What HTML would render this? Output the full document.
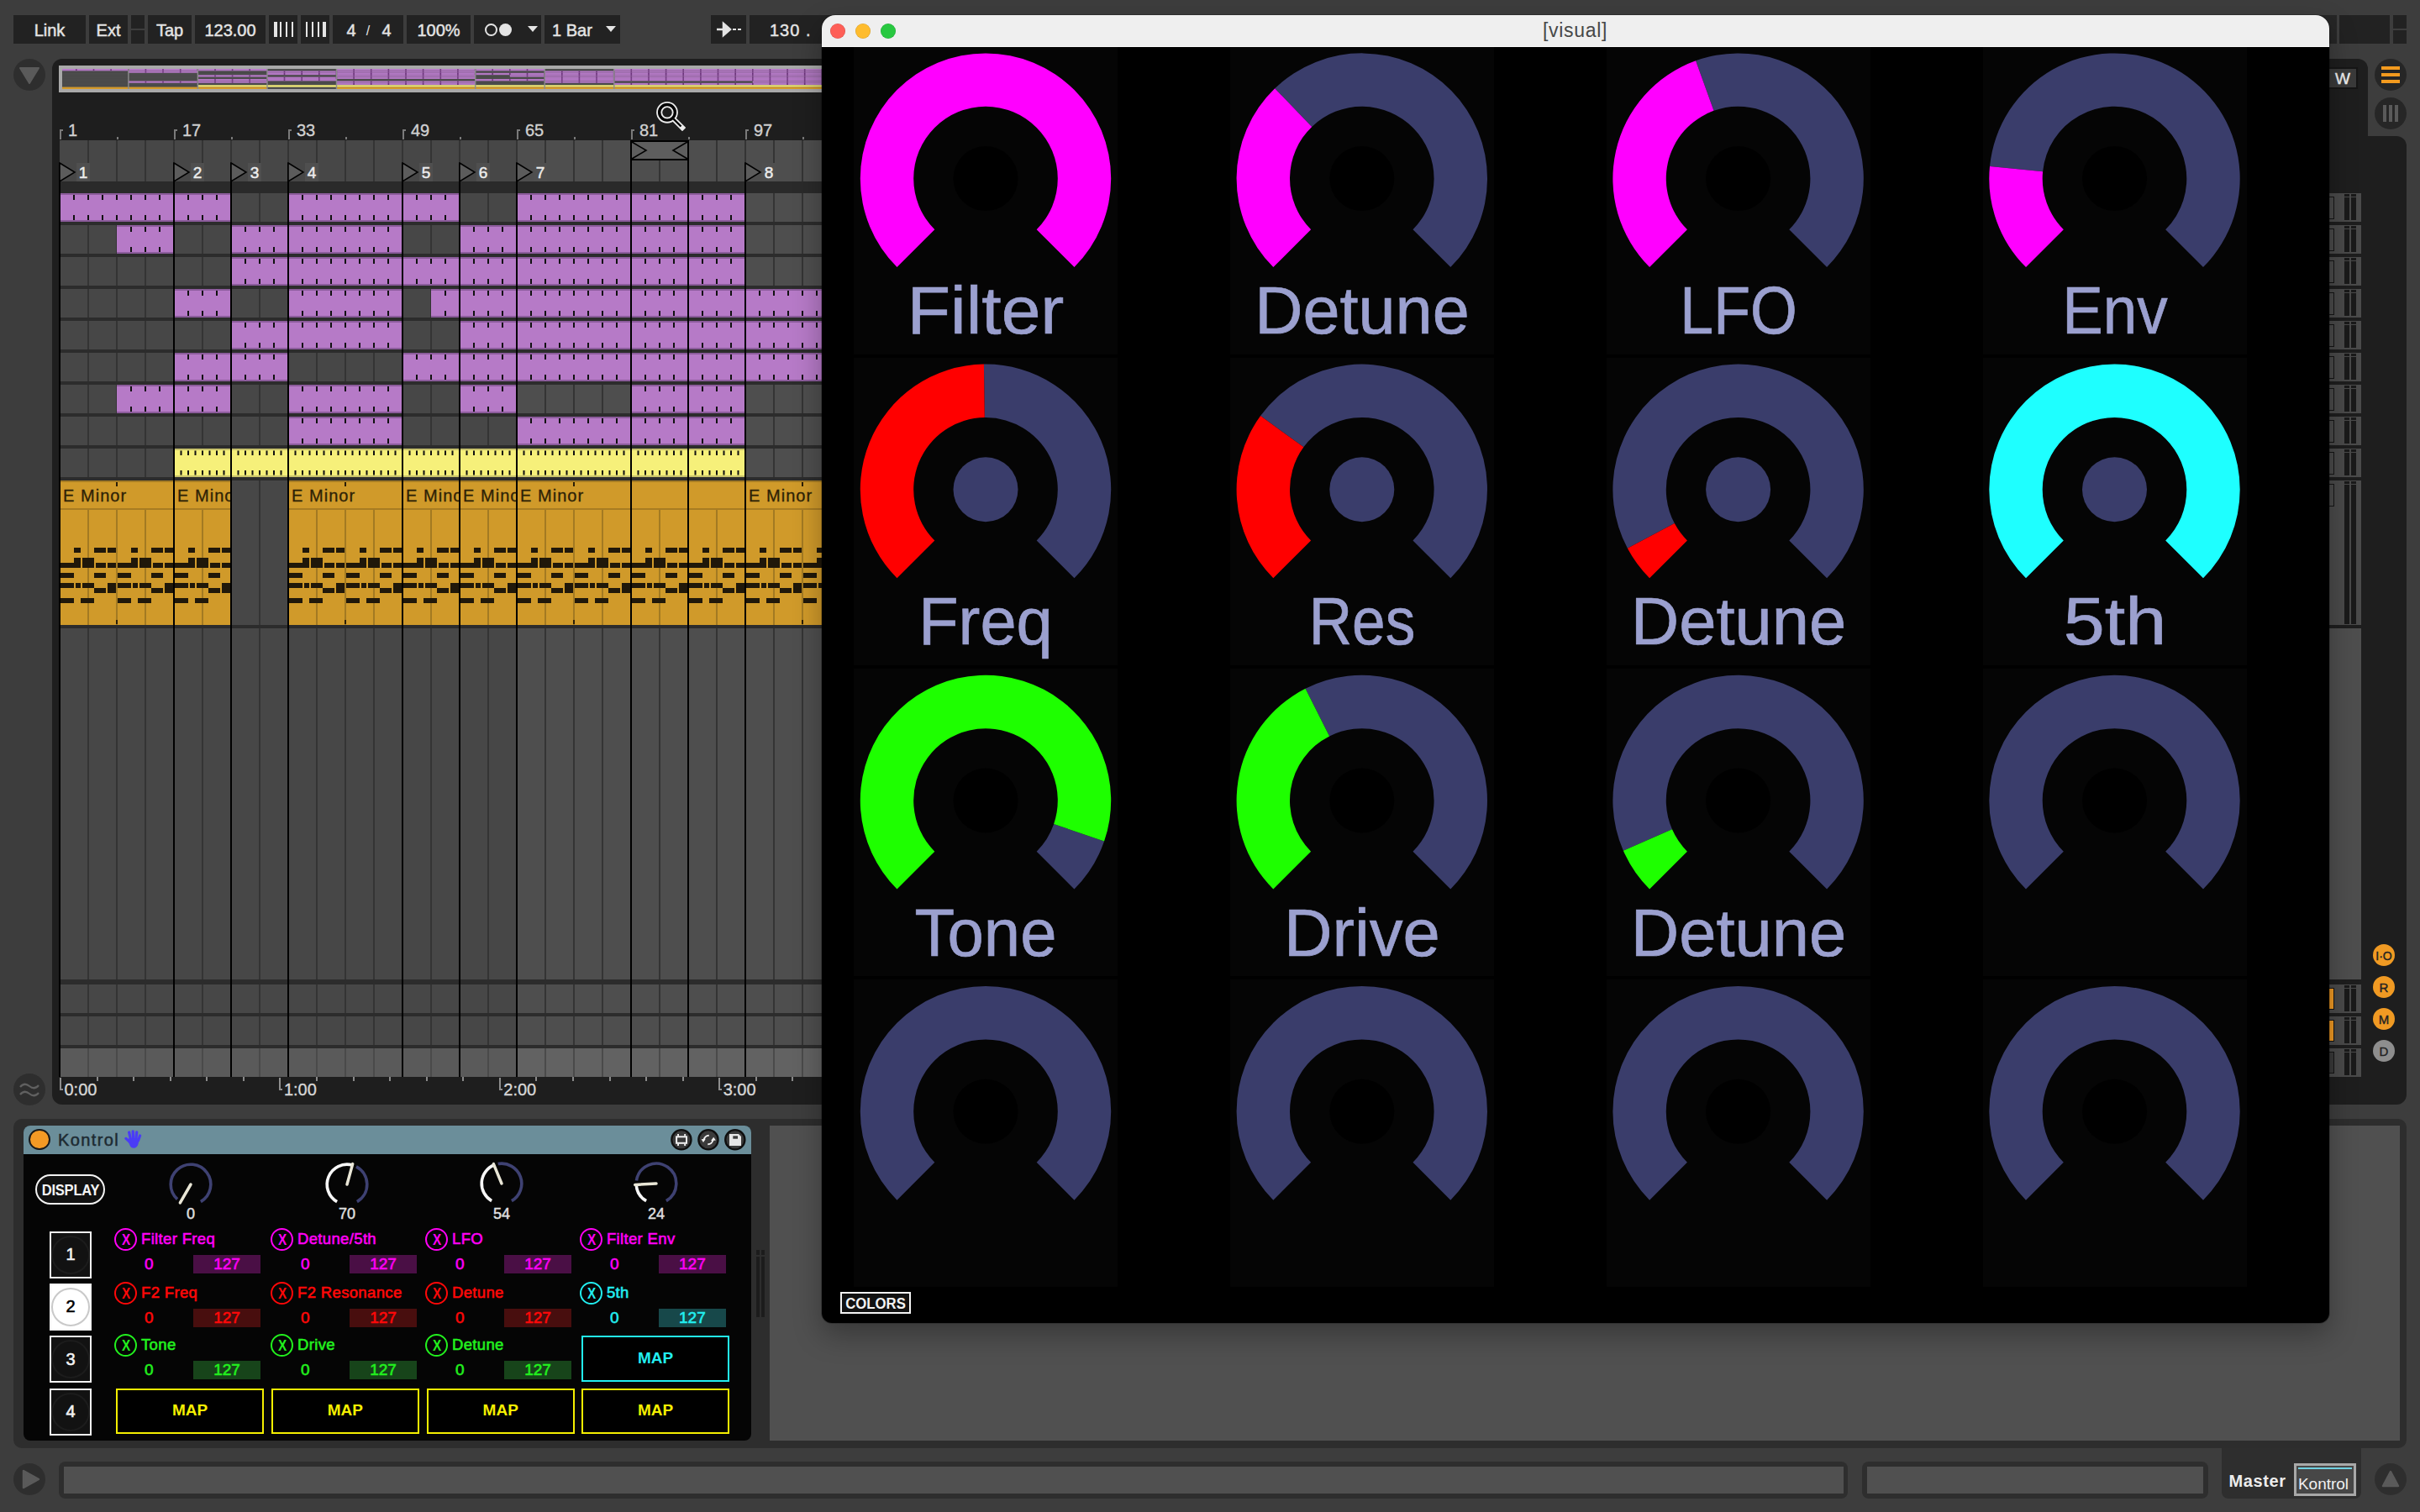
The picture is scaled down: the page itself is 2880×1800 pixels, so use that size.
<!DOCTYPE html>
<html><head><meta charset="utf-8"><style>
html,body{margin:0;padding:0;}
body{width:2880px;height:1800px;background:#3d3d3d;position:relative;overflow:hidden;font-family:"Liberation Sans",sans-serif;}
body div, body svg{position:absolute;}
.t{white-space:pre;line-height:1;}
</style></head><body>
<div style="left:16px;top:18px;width:86px;height:34px;background:#222222;"></div><div style="left:106px;top:18px;width:46px;height:34px;background:#222222;"></div><div style="left:176px;top:18px;width:52px;height:34px;background:#222222;"></div><div style="left:232px;top:18px;width:84px;height:34px;background:#222222;"></div><div style="left:320px;top:18px;width:34px;height:34px;background:#222222;"></div><div style="left:358px;top:18px;width:34px;height:34px;background:#222222;"></div><div style="left:396px;top:18px;width:84px;height:34px;background:#222222;"></div><div style="left:484px;top:18px;width:76px;height:34px;background:#222222;"></div><div style="left:564px;top:18px;width:80px;height:34px;background:#222222;"></div><div style="left:648px;top:18px;width:90px;height:34px;background:#222222;"></div><div style="left:846px;top:18px;width:42px;height:34px;background:#222222;"></div><div style="left:892px;top:18px;width:98px;height:34px;background:#222222;"></div><div style="left:156px;top:18px;width:16px;height:16px;background:#222222;"></div><div style="left:156px;top:36px;width:16px;height:16px;background:#222222;"></div><div class="t" style="left:-541.00px;width:1200px;text-align:center;top:25.57px;font-size:20px;color:#e4e4e4;-webkit-text-stroke:0.45px #e4e4e4">Link</div><div class="t" style="left:-471.00px;width:1200px;text-align:center;top:25.57px;font-size:20px;color:#e4e4e4;-webkit-text-stroke:0.45px #e4e4e4">Ext</div><div class="t" style="left:-398.00px;width:1200px;text-align:center;top:25.57px;font-size:20px;color:#e4e4e4;-webkit-text-stroke:0.45px #e4e4e4">Tap</div><div class="t" style="left:-326.00px;width:1200px;text-align:center;top:25.57px;font-size:20px;color:#e4e4e4;-webkit-text-stroke:0.45px #e4e4e4">123.00</div><div style="left:326px;top:26px;width:4px;height:18px;background:#e4e4e4;"></div><div style="left:333px;top:26px;width:2px;height:18px;background:#e4e4e4;"></div><div style="left:340px;top:26px;width:2px;height:18px;background:#e4e4e4;"></div><div style="left:347px;top:26px;width:2px;height:18px;background:#e4e4e4;"></div><div style="left:364px;top:26px;width:2px;height:18px;background:#e4e4e4;"></div><div style="left:371px;top:26px;width:2px;height:18px;background:#e4e4e4;"></div><div style="left:378px;top:26px;width:2px;height:18px;background:#e4e4e4;"></div><div style="left:384px;top:26px;width:4px;height:18px;background:#e4e4e4;"></div><div class="t" style="left:-182.00px;width:1200px;text-align:center;top:25.57px;font-size:20px;color:#e4e4e4;-webkit-text-stroke:0.45px #e4e4e4">4</div><div class="t" style="left:-162.00px;width:1200px;text-align:center;top:28.96px;font-size:16px;color:#e4e4e4;">/</div><div class="t" style="left:-140.00px;width:1200px;text-align:center;top:25.57px;font-size:20px;color:#e4e4e4;-webkit-text-stroke:0.45px #e4e4e4">4</div><div class="t" style="left:-78.00px;width:1200px;text-align:center;top:25.57px;font-size:20px;color:#e4e4e4;-webkit-text-stroke:0.45px #e4e4e4">100%</div><div style="left:577px;top:28px;width:11px;height:11px;border:2px solid #e4e4e4;border-radius:50%"></div><div style="left:594px;top:28px;width:15px;height:15px;background:#e4e4e4;border-radius:50%"></div><svg style="left:628px;top:31px" width="12" height="8"><path d="M0 0 L12 0 L6 7 Z" fill="#e4e4e4"/></svg><div class="t" style="left:657.00px;top:25.57px;font-size:20px;color:#e4e4e4;-webkit-text-stroke:0.45px #e4e4e4">1 Bar</div><svg style="left:721px;top:31px" width="12" height="8"><path d="M0 0 L12 0 L6 7 Z" fill="#e4e4e4"/></svg><svg style="left:851px;top:25px" width="32" height="20"><path d="M2 10 H14 M10 3 L18 10 L10 17 Z" stroke="#e4e4e4" stroke-width="2.5" fill="#e4e4e4"/><path d="M21 10 H25 M27 10 H31" stroke="#e4e4e4" stroke-width="2"/></svg><div class="t" style="left:916.00px;top:25.57px;font-size:20px;color:#e4e4e4;letter-spacing:1px;-webkit-text-stroke:0.45px #e4e4e4">130 .</div><div style="left:16px;top:70px;width:38px;height:38px;border-radius:50%;background:#2e2e2e"></div><svg style="left:23px;top:80px" width="24" height="20"><path d="M1 1 L23 1 L12 19 Z" fill="#5a5a5a" stroke="#5a5a5a" stroke-width="2" stroke-linejoin="round"/></svg><div style="left:16px;top:1278px;width:38px;height:38px;border-radius:50%;background:#2e2e2e"></div><svg style="left:22px;top:1286px" width="26" height="22"><path d="M2 8 Q7 2 13 7 T24 6 M2 17 Q7 11 13 16 T24 15" stroke="#606060" stroke-width="2.2" fill="none"/></svg><div style="left:62px;top:70px;width:2756px;height:1245px;background:#1e1e1e;border-radius:12px"></div><div style="left:2760px;top:162px;width:104px;height:1153px;background:#1e1e1e;border-radius:12px"></div><div style="left:70px;top:78px;width:920px;height:32px;background:#a9a9a9;"></div><div style="left:74px;top:82px;width:916px;height:24px;background:#4d4d4d;"></div><svg style="left:74px;top:82px" width="916" height="24"><rect x="0.0" y="0.00" width="243.9" height="2.4" fill="#b57ac6"/><rect x="326.4" y="0.00" width="247.7" height="2.4" fill="#b57ac6"/><rect x="656.7" y="0.00" width="259.3" height="2.4" fill="#b57ac6"/><rect x="78.8" y="2.40" width="82.6" height="2.4" fill="#b57ac6"/><rect x="243.9" y="2.40" width="247.7" height="2.4" fill="#b57ac6"/><rect x="574.1" y="2.40" width="341.9" height="2.4" fill="#b57ac6"/><rect x="243.9" y="4.80" width="672.1" height="2.4" fill="#b57ac6"/><rect x="161.3" y="7.20" width="82.6" height="2.4" fill="#b57ac6"/><rect x="326.4" y="7.20" width="165.1" height="2.4" fill="#b57ac6"/><rect x="532.8" y="7.20" width="383.2" height="2.4" fill="#b57ac6"/><rect x="243.9" y="9.60" width="247.7" height="2.4" fill="#b57ac6"/><rect x="574.1" y="9.60" width="341.9" height="2.4" fill="#b57ac6"/><rect x="161.3" y="12.00" width="165.1" height="2.4" fill="#b57ac6"/><rect x="491.6" y="12.00" width="424.4" height="2.4" fill="#b57ac6"/><rect x="78.8" y="14.40" width="165.1" height="2.4" fill="#b57ac6"/><rect x="326.4" y="14.40" width="165.1" height="2.4" fill="#b57ac6"/><rect x="574.1" y="14.40" width="82.6" height="2.4" fill="#b57ac6"/><rect x="821.8" y="14.40" width="94.2" height="2.4" fill="#b57ac6"/><rect x="326.4" y="16.80" width="165.1" height="2.4" fill="#b57ac6"/><rect x="656.7" y="16.80" width="259.3" height="2.4" fill="#b57ac6"/><rect x="161.3" y="19.20" width="754.7" height="2.4" fill="#f2ec7a"/><rect x="0.0" y="21.60" width="243.9" height="2.6" fill="#d49a2a"/><rect x="326.4" y="21.60" width="589.6" height="2.6" fill="#d49a2a"/><rect x="0" y="2.10" width="916" height="0.6" fill="#000" opacity="0.12"/><rect x="0" y="4.50" width="916" height="0.6" fill="#000" opacity="0.12"/><rect x="0" y="6.90" width="916" height="0.6" fill="#000" opacity="0.12"/><rect x="0" y="9.30" width="916" height="0.6" fill="#000" opacity="0.12"/><rect x="0" y="11.70" width="916" height="0.6" fill="#000" opacity="0.12"/><rect x="0" y="14.10" width="916" height="0.6" fill="#000" opacity="0.12"/><rect x="0" y="16.50" width="916" height="0.6" fill="#000" opacity="0.12"/><rect x="0" y="18.90" width="916" height="0.6" fill="#000" opacity="0.12"/><path d="M16.8 0.30 v1.8 M37.5 0.30 v1.8 M58.1 0.30 v1.8 M78.8 0.30 v1.8 M99.4 0.30 v1.8 M120.0 0.30 v1.8 M140.7 0.30 v1.8 M161.3 0.30 v1.8 M182.0 0.30 v1.8 M202.6 0.30 v1.8 M223.2 0.30 v1.8 M347.1 0.30 v1.8 M367.7 0.30 v1.8 M388.4 0.30 v1.8 M409.0 0.30 v1.8 M429.6 0.30 v1.8 M450.3 0.30 v1.8 M470.9 0.30 v1.8 M491.6 0.30 v1.8 M512.2 0.30 v1.8 M532.8 0.30 v1.8 M553.5 0.30 v1.8 M677.3 0.30 v1.8 M698.0 0.30 v1.8 M718.6 0.30 v1.8 M739.2 0.30 v1.8 M759.9 0.30 v1.8 M780.5 0.30 v1.8 M801.2 0.30 v1.8 M821.8 0.30 v1.8 M842.4 0.30 v1.8 M863.1 0.30 v1.8 M883.7 0.30 v1.8 M904.4 0.30 v1.8 M99.4 2.70 v1.8 M120.0 2.70 v1.8 M140.7 2.70 v1.8 M264.5 2.70 v1.8 M285.2 2.70 v1.8 M305.8 2.70 v1.8 M326.4 2.70 v1.8 M347.1 2.70 v1.8 M367.7 2.70 v1.8 M388.4 2.70 v1.8 M409.0 2.70 v1.8 M429.6 2.70 v1.8 M450.3 2.70 v1.8 M470.9 2.70 v1.8 M594.8 2.70 v1.8 M615.4 2.70 v1.8 M636.0 2.70 v1.8 M656.7 2.70 v1.8 M677.3 2.70 v1.8 M698.0 2.70 v1.8 M718.6 2.70 v1.8 M739.2 2.70 v1.8 M759.9 2.70 v1.8 M780.5 2.70 v1.8 M801.2 2.70 v1.8 M821.8 2.70 v1.8 M842.4 2.70 v1.8 M863.1 2.70 v1.8 M883.7 2.70 v1.8 M904.4 2.70 v1.8 M264.5 5.10 v1.8 M285.2 5.10 v1.8 M305.8 5.10 v1.8 M326.4 5.10 v1.8 M347.1 5.10 v1.8 M367.7 5.10 v1.8 M388.4 5.10 v1.8 M409.0 5.10 v1.8 M429.6 5.10 v1.8 M450.3 5.10 v1.8 M470.9 5.10 v1.8 M491.6 5.10 v1.8 M512.2 5.10 v1.8 M532.8 5.10 v1.8 M553.5 5.10 v1.8 M574.1 5.10 v1.8 M594.8 5.10 v1.8 M615.4 5.10 v1.8 M636.0 5.10 v1.8 M656.7 5.10 v1.8 M677.3 5.10 v1.8 M698.0 5.10 v1.8 M718.6 5.10 v1.8 M739.2 5.10 v1.8 M759.9 5.10 v1.8 M780.5 5.10 v1.8 M801.2 5.10 v1.8 M821.8 5.10 v1.8 M842.4 5.10 v1.8 M863.1 5.10 v1.8 M883.7 5.10 v1.8 M904.4 5.10 v1.8 M182.0 7.50 v1.8 M202.6 7.50 v1.8 M223.2 7.50 v1.8 M347.1 7.50 v1.8 M367.7 7.50 v1.8 M388.4 7.50 v1.8 M409.0 7.50 v1.8 M429.6 7.50 v1.8 M450.3 7.50 v1.8 M470.9 7.50 v1.8 M553.5 7.50 v1.8 M574.1 7.50 v1.8 M594.8 7.50 v1.8 M615.4 7.50 v1.8 M636.0 7.50 v1.8 M656.7 7.50 v1.8 M677.3 7.50 v1.8 M698.0 7.50 v1.8 M718.6 7.50 v1.8 M739.2 7.50 v1.8 M759.9 7.50 v1.8 M780.5 7.50 v1.8 M801.2 7.50 v1.8 M821.8 7.50 v1.8 M842.4 7.50 v1.8 M863.1 7.50 v1.8 M883.7 7.50 v1.8 M904.4 7.50 v1.8 M264.5 9.90 v1.8 M285.2 9.90 v1.8 M305.8 9.90 v1.8 M326.4 9.90 v1.8 M347.1 9.90 v1.8 M367.7 9.90 v1.8 M388.4 9.90 v1.8 M409.0 9.90 v1.8 M429.6 9.90 v1.8 M450.3 9.90 v1.8 M470.9 9.90 v1.8 M594.8 9.90 v1.8 M615.4 9.90 v1.8 M636.0 9.90 v1.8 M656.7 9.90 v1.8 M677.3 9.90 v1.8 M698.0 9.90 v1.8 M718.6 9.90 v1.8 M739.2 9.90 v1.8 M759.9 9.90 v1.8 M780.5 9.90 v1.8 M801.2 9.90 v1.8 M821.8 9.90 v1.8 M842.4 9.90 v1.8 M863.1 9.90 v1.8 M883.7 9.90 v1.8 M904.4 9.90 v1.8 M182.0 12.30 v1.8 M202.6 12.30 v1.8 M223.2 12.30 v1.8 M243.9 12.30 v1.8 M264.5 12.30 v1.8 M285.2 12.30 v1.8 M305.8 12.30 v1.8 M512.2 12.30 v1.8 M532.8 12.30 v1.8 M553.5 12.30 v1.8 M574.1 12.30 v1.8 M594.8 12.30 v1.8 M615.4 12.30 v1.8 M636.0 12.30 v1.8 M656.7 12.30 v1.8 M677.3 12.30 v1.8 M698.0 12.30 v1.8 M718.6 12.30 v1.8 M739.2 12.30 v1.8 M759.9 12.30 v1.8 M780.5 12.30 v1.8 M801.2 12.30 v1.8 M821.8 12.30 v1.8 M842.4 12.30 v1.8 M863.1 12.30 v1.8 M883.7 12.30 v1.8 M904.4 12.30 v1.8 M99.4 14.70 v1.8 M120.0 14.70 v1.8 M140.7 14.70 v1.8 M161.3 14.70 v1.8 M182.0 14.70 v1.8 M202.6 14.70 v1.8 M223.2 14.70 v1.8 M347.1 14.70 v1.8 M367.7 14.70 v1.8 M388.4 14.70 v1.8 M409.0 14.70 v1.8 M429.6 14.70 v1.8 M450.3 14.70 v1.8 M470.9 14.70 v1.8 M594.8 14.70 v1.8 M615.4 14.70 v1.8 M636.0 14.70 v1.8 M842.4 14.70 v1.8 M863.1 14.70 v1.8 M883.7 14.70 v1.8 M904.4 14.70 v1.8 M347.1 17.10 v1.8 M367.7 17.10 v1.8 M388.4 17.10 v1.8 M409.0 17.10 v1.8 M429.6 17.10 v1.8 M450.3 17.10 v1.8 M470.9 17.10 v1.8 M677.3 17.10 v1.8 M698.0 17.10 v1.8 M718.6 17.10 v1.8 M739.2 17.10 v1.8 M759.9 17.10 v1.8 M780.5 17.10 v1.8 M801.2 17.10 v1.8 M821.8 17.10 v1.8 M842.4 17.10 v1.8 M863.1 17.10 v1.8 M883.7 17.10 v1.8 M904.4 17.10 v1.8 " stroke="#5a2268" stroke-width="1.6" opacity="0.8"/><rect x="78.2" y="0" width="1.4" height="24" fill="#8c8c8c"/><rect x="160.7" y="0" width="1.4" height="24" fill="#8c8c8c"/><rect x="243.3" y="0" width="1.4" height="24" fill="#8c8c8c"/><rect x="325.8" y="0" width="1.4" height="24" fill="#8c8c8c"/><rect x="491.0" y="0" width="1.4" height="24" fill="#8c8c8c"/><rect x="573.5" y="0" width="1.4" height="24" fill="#8c8c8c"/><rect x="656.1" y="0" width="1.4" height="24" fill="#8c8c8c"/></svg><div style="left:71.0px;top:154px;width:2px;height:12px;background:#7a7a7a;"></div><div style="left:71.0px;top:154px;width:4px;height:2px;background:#7a7a7a;"></div><div class="t" style="left:81.00px;top:145.07px;font-size:20px;color:#d0d0d0;-webkit-text-stroke:0.35px #d0d0d0">1</div><div style="left:207.0px;top:154px;width:2px;height:12px;background:#7a7a7a;"></div><div style="left:207.0px;top:154px;width:4px;height:2px;background:#7a7a7a;"></div><div class="t" style="left:217.00px;top:145.07px;font-size:20px;color:#d0d0d0;-webkit-text-stroke:0.35px #d0d0d0">17</div><div style="left:343.0px;top:154px;width:2px;height:12px;background:#7a7a7a;"></div><div style="left:343.0px;top:154px;width:4px;height:2px;background:#7a7a7a;"></div><div class="t" style="left:353.00px;top:145.07px;font-size:20px;color:#d0d0d0;-webkit-text-stroke:0.35px #d0d0d0">33</div><div style="left:479.0px;top:154px;width:2px;height:12px;background:#7a7a7a;"></div><div style="left:479.0px;top:154px;width:4px;height:2px;background:#7a7a7a;"></div><div class="t" style="left:489.00px;top:145.07px;font-size:20px;color:#d0d0d0;-webkit-text-stroke:0.35px #d0d0d0">49</div><div style="left:615.0px;top:154px;width:2px;height:12px;background:#7a7a7a;"></div><div style="left:615.0px;top:154px;width:4px;height:2px;background:#7a7a7a;"></div><div class="t" style="left:625.00px;top:145.07px;font-size:20px;color:#d0d0d0;-webkit-text-stroke:0.35px #d0d0d0">65</div><div style="left:751.0px;top:154px;width:2px;height:12px;background:#7a7a7a;"></div><div style="left:751.0px;top:154px;width:4px;height:2px;background:#7a7a7a;"></div><div class="t" style="left:761.00px;top:145.07px;font-size:20px;color:#d0d0d0;-webkit-text-stroke:0.35px #d0d0d0">81</div><div style="left:887.0px;top:154px;width:2px;height:12px;background:#7a7a7a;"></div><div style="left:887.0px;top:154px;width:4px;height:2px;background:#7a7a7a;"></div><div class="t" style="left:897.00px;top:145.07px;font-size:20px;color:#d0d0d0;-webkit-text-stroke:0.35px #d0d0d0">97</div><div style="left:139.0px;top:163px;width:2px;height:3px;background:#7a7a7a;"></div><div style="left:275.0px;top:163px;width:2px;height:3px;background:#7a7a7a;"></div><div style="left:411.0px;top:163px;width:2px;height:3px;background:#7a7a7a;"></div><div style="left:547.0px;top:163px;width:2px;height:3px;background:#7a7a7a;"></div><div style="left:683.0px;top:163px;width:2px;height:3px;background:#7a7a7a;"></div><div style="left:819.0px;top:163px;width:2px;height:3px;background:#7a7a7a;"></div><div style="left:955.0px;top:163px;width:2px;height:3px;background:#7a7a7a;"></div><div style="left:71px;top:167px;width:544px;height:49px;background:#474747;"></div><div style="left:615px;top:167px;width:375px;height:49px;background:#4e4e4e;"></div><div style="left:71px;top:216px;width:919px;height:14px;background:#2a2a2a;"></div><div style="left:71px;top:230px;width:544px;height:34px;background:#474747;"></div><div style="left:615px;top:230px;width:375px;height:34px;background:#4e4e4e;"></div><div style="left:71px;top:264px;width:919px;height:4px;background:#2c2c2c;"></div><div style="left:71px;top:268px;width:544px;height:34px;background:#474747;"></div><div style="left:615px;top:268px;width:375px;height:34px;background:#4e4e4e;"></div><div style="left:71px;top:302px;width:919px;height:4px;background:#2c2c2c;"></div><div style="left:71px;top:306px;width:544px;height:34px;background:#474747;"></div><div style="left:615px;top:306px;width:375px;height:34px;background:#4e4e4e;"></div><div style="left:71px;top:340px;width:919px;height:4px;background:#2c2c2c;"></div><div style="left:71px;top:344px;width:544px;height:34px;background:#474747;"></div><div style="left:615px;top:344px;width:375px;height:34px;background:#4e4e4e;"></div><div style="left:71px;top:378px;width:919px;height:4px;background:#2c2c2c;"></div><div style="left:71px;top:382px;width:544px;height:34px;background:#474747;"></div><div style="left:615px;top:382px;width:375px;height:34px;background:#4e4e4e;"></div><div style="left:71px;top:416px;width:919px;height:4px;background:#2c2c2c;"></div><div style="left:71px;top:420px;width:544px;height:34px;background:#474747;"></div><div style="left:615px;top:420px;width:375px;height:34px;background:#4e4e4e;"></div><div style="left:71px;top:454px;width:919px;height:4px;background:#2c2c2c;"></div><div style="left:71px;top:458px;width:544px;height:34px;background:#474747;"></div><div style="left:615px;top:458px;width:375px;height:34px;background:#4e4e4e;"></div><div style="left:71px;top:492px;width:919px;height:4px;background:#2c2c2c;"></div><div style="left:71px;top:496px;width:544px;height:34px;background:#474747;"></div><div style="left:615px;top:496px;width:375px;height:34px;background:#4e4e4e;"></div><div style="left:71px;top:530px;width:919px;height:4px;background:#2c2c2c;"></div><div style="left:71px;top:534px;width:544px;height:34px;background:#474747;"></div><div style="left:615px;top:534px;width:375px;height:34px;background:#4e4e4e;"></div><div style="left:71px;top:568px;width:919px;height:4px;background:#2c2c2c;"></div><div style="left:71px;top:572px;width:544px;height:172px;background:#474747;"></div><div style="left:615px;top:572px;width:375px;height:172px;background:#4e4e4e;"></div><div style="left:71px;top:744px;width:919px;height:4px;background:#2c2c2c;"></div><div style="left:71px;top:748px;width:544px;height:418px;background:#474747;"></div><div style="left:615px;top:748px;width:375px;height:418px;background:#4e4e4e;"></div><div style="left:71px;top:1166px;width:919px;height:6px;background:#2c2c2c;"></div><div style="left:71px;top:1172px;width:544px;height:34px;background:#474747;"></div><div style="left:615px;top:1172px;width:375px;height:34px;background:#4e4e4e;"></div><div style="left:71px;top:1206px;width:919px;height:4px;background:#2c2c2c;"></div><div style="left:71px;top:1210px;width:544px;height:34px;background:#474747;"></div><div style="left:615px;top:1210px;width:375px;height:34px;background:#4e4e4e;"></div><div style="left:71px;top:1244px;width:919px;height:4px;background:#2c2c2c;"></div><div style="left:71px;top:1248px;width:544px;height:34px;background:#5a5a5a;"></div><div style="left:615px;top:1248px;width:375px;height:34px;background:#626262;"></div><div style="left:104px;top:167px;width:2px;height:49px;background:#343434"></div><div style="left:104px;top:230px;width:2px;height:34px;background:#343434"></div><div style="left:104px;top:268px;width:2px;height:34px;background:#343434"></div><div style="left:104px;top:306px;width:2px;height:34px;background:#343434"></div><div style="left:104px;top:344px;width:2px;height:34px;background:#343434"></div><div style="left:104px;top:382px;width:2px;height:34px;background:#343434"></div><div style="left:104px;top:420px;width:2px;height:34px;background:#343434"></div><div style="left:104px;top:458px;width:2px;height:34px;background:#343434"></div><div style="left:104px;top:496px;width:2px;height:34px;background:#343434"></div><div style="left:104px;top:534px;width:2px;height:34px;background:#343434"></div><div style="left:104px;top:572px;width:2px;height:172px;background:#343434"></div><div style="left:104px;top:748px;width:2px;height:418px;background:#343434"></div><div style="left:104px;top:1172px;width:2px;height:34px;background:#343434"></div><div style="left:104px;top:1210px;width:2px;height:34px;background:#343434"></div><div style="left:104px;top:1248px;width:2px;height:34px;background:#4a4a4a"></div><div style="left:138px;top:167px;width:2px;height:49px;background:#343434"></div><div style="left:138px;top:230px;width:2px;height:34px;background:#343434"></div><div style="left:138px;top:268px;width:2px;height:34px;background:#343434"></div><div style="left:138px;top:306px;width:2px;height:34px;background:#343434"></div><div style="left:138px;top:344px;width:2px;height:34px;background:#343434"></div><div style="left:138px;top:382px;width:2px;height:34px;background:#343434"></div><div style="left:138px;top:420px;width:2px;height:34px;background:#343434"></div><div style="left:138px;top:458px;width:2px;height:34px;background:#343434"></div><div style="left:138px;top:496px;width:2px;height:34px;background:#343434"></div><div style="left:138px;top:534px;width:2px;height:34px;background:#343434"></div><div style="left:138px;top:572px;width:2px;height:172px;background:#343434"></div><div style="left:138px;top:748px;width:2px;height:418px;background:#343434"></div><div style="left:138px;top:1172px;width:2px;height:34px;background:#343434"></div><div style="left:138px;top:1210px;width:2px;height:34px;background:#343434"></div><div style="left:138px;top:1248px;width:2px;height:34px;background:#4a4a4a"></div><div style="left:172px;top:167px;width:2px;height:49px;background:#343434"></div><div style="left:172px;top:230px;width:2px;height:34px;background:#343434"></div><div style="left:172px;top:268px;width:2px;height:34px;background:#343434"></div><div style="left:172px;top:306px;width:2px;height:34px;background:#343434"></div><div style="left:172px;top:344px;width:2px;height:34px;background:#343434"></div><div style="left:172px;top:382px;width:2px;height:34px;background:#343434"></div><div style="left:172px;top:420px;width:2px;height:34px;background:#343434"></div><div style="left:172px;top:458px;width:2px;height:34px;background:#343434"></div><div style="left:172px;top:496px;width:2px;height:34px;background:#343434"></div><div style="left:172px;top:534px;width:2px;height:34px;background:#343434"></div><div style="left:172px;top:572px;width:2px;height:172px;background:#343434"></div><div style="left:172px;top:748px;width:2px;height:418px;background:#343434"></div><div style="left:172px;top:1172px;width:2px;height:34px;background:#343434"></div><div style="left:172px;top:1210px;width:2px;height:34px;background:#343434"></div><div style="left:172px;top:1248px;width:2px;height:34px;background:#4a4a4a"></div><div style="left:206px;top:167px;width:2px;height:49px;background:#343434"></div><div style="left:206px;top:230px;width:2px;height:34px;background:#343434"></div><div style="left:206px;top:268px;width:2px;height:34px;background:#343434"></div><div style="left:206px;top:306px;width:2px;height:34px;background:#343434"></div><div style="left:206px;top:344px;width:2px;height:34px;background:#343434"></div><div style="left:206px;top:382px;width:2px;height:34px;background:#343434"></div><div style="left:206px;top:420px;width:2px;height:34px;background:#343434"></div><div style="left:206px;top:458px;width:2px;height:34px;background:#343434"></div><div style="left:206px;top:496px;width:2px;height:34px;background:#343434"></div><div style="left:206px;top:534px;width:2px;height:34px;background:#343434"></div><div style="left:206px;top:572px;width:2px;height:172px;background:#343434"></div><div style="left:206px;top:748px;width:2px;height:418px;background:#343434"></div><div style="left:206px;top:1172px;width:2px;height:34px;background:#343434"></div><div style="left:206px;top:1210px;width:2px;height:34px;background:#343434"></div><div style="left:206px;top:1248px;width:2px;height:34px;background:#4a4a4a"></div><div style="left:240px;top:167px;width:2px;height:49px;background:#343434"></div><div style="left:240px;top:230px;width:2px;height:34px;background:#343434"></div><div style="left:240px;top:268px;width:2px;height:34px;background:#343434"></div><div style="left:240px;top:306px;width:2px;height:34px;background:#343434"></div><div style="left:240px;top:344px;width:2px;height:34px;background:#343434"></div><div style="left:240px;top:382px;width:2px;height:34px;background:#343434"></div><div style="left:240px;top:420px;width:2px;height:34px;background:#343434"></div><div style="left:240px;top:458px;width:2px;height:34px;background:#343434"></div><div style="left:240px;top:496px;width:2px;height:34px;background:#343434"></div><div style="left:240px;top:534px;width:2px;height:34px;background:#343434"></div><div style="left:240px;top:572px;width:2px;height:172px;background:#343434"></div><div style="left:240px;top:748px;width:2px;height:418px;background:#343434"></div><div style="left:240px;top:1172px;width:2px;height:34px;background:#343434"></div><div style="left:240px;top:1210px;width:2px;height:34px;background:#343434"></div><div style="left:240px;top:1248px;width:2px;height:34px;background:#4a4a4a"></div><div style="left:274px;top:167px;width:2px;height:49px;background:#343434"></div><div style="left:274px;top:230px;width:2px;height:34px;background:#343434"></div><div style="left:274px;top:268px;width:2px;height:34px;background:#343434"></div><div style="left:274px;top:306px;width:2px;height:34px;background:#343434"></div><div style="left:274px;top:344px;width:2px;height:34px;background:#343434"></div><div style="left:274px;top:382px;width:2px;height:34px;background:#343434"></div><div style="left:274px;top:420px;width:2px;height:34px;background:#343434"></div><div style="left:274px;top:458px;width:2px;height:34px;background:#343434"></div><div style="left:274px;top:496px;width:2px;height:34px;background:#343434"></div><div style="left:274px;top:534px;width:2px;height:34px;background:#343434"></div><div style="left:274px;top:572px;width:2px;height:172px;background:#343434"></div><div style="left:274px;top:748px;width:2px;height:418px;background:#343434"></div><div style="left:274px;top:1172px;width:2px;height:34px;background:#343434"></div><div style="left:274px;top:1210px;width:2px;height:34px;background:#343434"></div><div style="left:274px;top:1248px;width:2px;height:34px;background:#4a4a4a"></div><div style="left:308px;top:167px;width:2px;height:49px;background:#343434"></div><div style="left:308px;top:230px;width:2px;height:34px;background:#343434"></div><div style="left:308px;top:268px;width:2px;height:34px;background:#343434"></div><div style="left:308px;top:306px;width:2px;height:34px;background:#343434"></div><div style="left:308px;top:344px;width:2px;height:34px;background:#343434"></div><div style="left:308px;top:382px;width:2px;height:34px;background:#343434"></div><div style="left:308px;top:420px;width:2px;height:34px;background:#343434"></div><div style="left:308px;top:458px;width:2px;height:34px;background:#343434"></div><div style="left:308px;top:496px;width:2px;height:34px;background:#343434"></div><div style="left:308px;top:534px;width:2px;height:34px;background:#343434"></div><div style="left:308px;top:572px;width:2px;height:172px;background:#343434"></div><div style="left:308px;top:748px;width:2px;height:418px;background:#343434"></div><div style="left:308px;top:1172px;width:2px;height:34px;background:#343434"></div><div style="left:308px;top:1210px;width:2px;height:34px;background:#343434"></div><div style="left:308px;top:1248px;width:2px;height:34px;background:#4a4a4a"></div><div style="left:342px;top:167px;width:2px;height:49px;background:#343434"></div><div style="left:342px;top:230px;width:2px;height:34px;background:#343434"></div><div style="left:342px;top:268px;width:2px;height:34px;background:#343434"></div><div style="left:342px;top:306px;width:2px;height:34px;background:#343434"></div><div style="left:342px;top:344px;width:2px;height:34px;background:#343434"></div><div style="left:342px;top:382px;width:2px;height:34px;background:#343434"></div><div style="left:342px;top:420px;width:2px;height:34px;background:#343434"></div><div style="left:342px;top:458px;width:2px;height:34px;background:#343434"></div><div style="left:342px;top:496px;width:2px;height:34px;background:#343434"></div><div style="left:342px;top:534px;width:2px;height:34px;background:#343434"></div><div style="left:342px;top:572px;width:2px;height:172px;background:#343434"></div><div style="left:342px;top:748px;width:2px;height:418px;background:#343434"></div><div style="left:342px;top:1172px;width:2px;height:34px;background:#343434"></div><div style="left:342px;top:1210px;width:2px;height:34px;background:#343434"></div><div style="left:342px;top:1248px;width:2px;height:34px;background:#4a4a4a"></div><div style="left:376px;top:167px;width:2px;height:49px;background:#343434"></div><div style="left:376px;top:230px;width:2px;height:34px;background:#343434"></div><div style="left:376px;top:268px;width:2px;height:34px;background:#343434"></div><div style="left:376px;top:306px;width:2px;height:34px;background:#343434"></div><div style="left:376px;top:344px;width:2px;height:34px;background:#343434"></div><div style="left:376px;top:382px;width:2px;height:34px;background:#343434"></div><div style="left:376px;top:420px;width:2px;height:34px;background:#343434"></div><div style="left:376px;top:458px;width:2px;height:34px;background:#343434"></div><div style="left:376px;top:496px;width:2px;height:34px;background:#343434"></div><div style="left:376px;top:534px;width:2px;height:34px;background:#343434"></div><div style="left:376px;top:572px;width:2px;height:172px;background:#343434"></div><div style="left:376px;top:748px;width:2px;height:418px;background:#343434"></div><div style="left:376px;top:1172px;width:2px;height:34px;background:#343434"></div><div style="left:376px;top:1210px;width:2px;height:34px;background:#343434"></div><div style="left:376px;top:1248px;width:2px;height:34px;background:#4a4a4a"></div><div style="left:410px;top:167px;width:2px;height:49px;background:#343434"></div><div style="left:410px;top:230px;width:2px;height:34px;background:#343434"></div><div style="left:410px;top:268px;width:2px;height:34px;background:#343434"></div><div style="left:410px;top:306px;width:2px;height:34px;background:#343434"></div><div style="left:410px;top:344px;width:2px;height:34px;background:#343434"></div><div style="left:410px;top:382px;width:2px;height:34px;background:#343434"></div><div style="left:410px;top:420px;width:2px;height:34px;background:#343434"></div><div style="left:410px;top:458px;width:2px;height:34px;background:#343434"></div><div style="left:410px;top:496px;width:2px;height:34px;background:#343434"></div><div style="left:410px;top:534px;width:2px;height:34px;background:#343434"></div><div style="left:410px;top:572px;width:2px;height:172px;background:#343434"></div><div style="left:410px;top:748px;width:2px;height:418px;background:#343434"></div><div style="left:410px;top:1172px;width:2px;height:34px;background:#343434"></div><div style="left:410px;top:1210px;width:2px;height:34px;background:#343434"></div><div style="left:410px;top:1248px;width:2px;height:34px;background:#4a4a4a"></div><div style="left:444px;top:167px;width:2px;height:49px;background:#343434"></div><div style="left:444px;top:230px;width:2px;height:34px;background:#343434"></div><div style="left:444px;top:268px;width:2px;height:34px;background:#343434"></div><div style="left:444px;top:306px;width:2px;height:34px;background:#343434"></div><div style="left:444px;top:344px;width:2px;height:34px;background:#343434"></div><div style="left:444px;top:382px;width:2px;height:34px;background:#343434"></div><div style="left:444px;top:420px;width:2px;height:34px;background:#343434"></div><div style="left:444px;top:458px;width:2px;height:34px;background:#343434"></div><div style="left:444px;top:496px;width:2px;height:34px;background:#343434"></div><div style="left:444px;top:534px;width:2px;height:34px;background:#343434"></div><div style="left:444px;top:572px;width:2px;height:172px;background:#343434"></div><div style="left:444px;top:748px;width:2px;height:418px;background:#343434"></div><div style="left:444px;top:1172px;width:2px;height:34px;background:#343434"></div><div style="left:444px;top:1210px;width:2px;height:34px;background:#343434"></div><div style="left:444px;top:1248px;width:2px;height:34px;background:#4a4a4a"></div><div style="left:478px;top:167px;width:2px;height:49px;background:#343434"></div><div style="left:478px;top:230px;width:2px;height:34px;background:#343434"></div><div style="left:478px;top:268px;width:2px;height:34px;background:#343434"></div><div style="left:478px;top:306px;width:2px;height:34px;background:#343434"></div><div style="left:478px;top:344px;width:2px;height:34px;background:#343434"></div><div style="left:478px;top:382px;width:2px;height:34px;background:#343434"></div><div style="left:478px;top:420px;width:2px;height:34px;background:#343434"></div><div style="left:478px;top:458px;width:2px;height:34px;background:#343434"></div><div style="left:478px;top:496px;width:2px;height:34px;background:#343434"></div><div style="left:478px;top:534px;width:2px;height:34px;background:#343434"></div><div style="left:478px;top:572px;width:2px;height:172px;background:#343434"></div><div style="left:478px;top:748px;width:2px;height:418px;background:#343434"></div><div style="left:478px;top:1172px;width:2px;height:34px;background:#343434"></div><div style="left:478px;top:1210px;width:2px;height:34px;background:#343434"></div><div style="left:478px;top:1248px;width:2px;height:34px;background:#4a4a4a"></div><div style="left:512px;top:167px;width:2px;height:49px;background:#343434"></div><div style="left:512px;top:230px;width:2px;height:34px;background:#343434"></div><div style="left:512px;top:268px;width:2px;height:34px;background:#343434"></div><div style="left:512px;top:306px;width:2px;height:34px;background:#343434"></div><div style="left:512px;top:344px;width:2px;height:34px;background:#343434"></div><div style="left:512px;top:382px;width:2px;height:34px;background:#343434"></div><div style="left:512px;top:420px;width:2px;height:34px;background:#343434"></div><div style="left:512px;top:458px;width:2px;height:34px;background:#343434"></div><div style="left:512px;top:496px;width:2px;height:34px;background:#343434"></div><div style="left:512px;top:534px;width:2px;height:34px;background:#343434"></div><div style="left:512px;top:572px;width:2px;height:172px;background:#343434"></div><div style="left:512px;top:748px;width:2px;height:418px;background:#343434"></div><div style="left:512px;top:1172px;width:2px;height:34px;background:#343434"></div><div style="left:512px;top:1210px;width:2px;height:34px;background:#343434"></div><div style="left:512px;top:1248px;width:2px;height:34px;background:#4a4a4a"></div><div style="left:546px;top:167px;width:2px;height:49px;background:#343434"></div><div style="left:546px;top:230px;width:2px;height:34px;background:#343434"></div><div style="left:546px;top:268px;width:2px;height:34px;background:#343434"></div><div style="left:546px;top:306px;width:2px;height:34px;background:#343434"></div><div style="left:546px;top:344px;width:2px;height:34px;background:#343434"></div><div style="left:546px;top:382px;width:2px;height:34px;background:#343434"></div><div style="left:546px;top:420px;width:2px;height:34px;background:#343434"></div><div style="left:546px;top:458px;width:2px;height:34px;background:#343434"></div><div style="left:546px;top:496px;width:2px;height:34px;background:#343434"></div><div style="left:546px;top:534px;width:2px;height:34px;background:#343434"></div><div style="left:546px;top:572px;width:2px;height:172px;background:#343434"></div><div style="left:546px;top:748px;width:2px;height:418px;background:#343434"></div><div style="left:546px;top:1172px;width:2px;height:34px;background:#343434"></div><div style="left:546px;top:1210px;width:2px;height:34px;background:#343434"></div><div style="left:546px;top:1248px;width:2px;height:34px;background:#4a4a4a"></div><div style="left:580px;top:167px;width:2px;height:49px;background:#343434"></div><div style="left:580px;top:230px;width:2px;height:34px;background:#343434"></div><div style="left:580px;top:268px;width:2px;height:34px;background:#343434"></div><div style="left:580px;top:306px;width:2px;height:34px;background:#343434"></div><div style="left:580px;top:344px;width:2px;height:34px;background:#343434"></div><div style="left:580px;top:382px;width:2px;height:34px;background:#343434"></div><div style="left:580px;top:420px;width:2px;height:34px;background:#343434"></div><div style="left:580px;top:458px;width:2px;height:34px;background:#343434"></div><div style="left:580px;top:496px;width:2px;height:34px;background:#343434"></div><div style="left:580px;top:534px;width:2px;height:34px;background:#343434"></div><div style="left:580px;top:572px;width:2px;height:172px;background:#343434"></div><div style="left:580px;top:748px;width:2px;height:418px;background:#343434"></div><div style="left:580px;top:1172px;width:2px;height:34px;background:#343434"></div><div style="left:580px;top:1210px;width:2px;height:34px;background:#343434"></div><div style="left:580px;top:1248px;width:2px;height:34px;background:#4a4a4a"></div><div style="left:614px;top:167px;width:2px;height:49px;background:#343434"></div><div style="left:614px;top:230px;width:2px;height:34px;background:#343434"></div><div style="left:614px;top:268px;width:2px;height:34px;background:#343434"></div><div style="left:614px;top:306px;width:2px;height:34px;background:#343434"></div><div style="left:614px;top:344px;width:2px;height:34px;background:#343434"></div><div style="left:614px;top:382px;width:2px;height:34px;background:#343434"></div><div style="left:614px;top:420px;width:2px;height:34px;background:#343434"></div><div style="left:614px;top:458px;width:2px;height:34px;background:#343434"></div><div style="left:614px;top:496px;width:2px;height:34px;background:#343434"></div><div style="left:614px;top:534px;width:2px;height:34px;background:#343434"></div><div style="left:614px;top:572px;width:2px;height:172px;background:#343434"></div><div style="left:614px;top:748px;width:2px;height:418px;background:#343434"></div><div style="left:614px;top:1172px;width:2px;height:34px;background:#343434"></div><div style="left:614px;top:1210px;width:2px;height:34px;background:#343434"></div><div style="left:614px;top:1248px;width:2px;height:34px;background:#4a4a4a"></div><div style="left:648px;top:167px;width:2px;height:49px;background:#343434"></div><div style="left:648px;top:230px;width:2px;height:34px;background:#343434"></div><div style="left:648px;top:268px;width:2px;height:34px;background:#343434"></div><div style="left:648px;top:306px;width:2px;height:34px;background:#343434"></div><div style="left:648px;top:344px;width:2px;height:34px;background:#343434"></div><div style="left:648px;top:382px;width:2px;height:34px;background:#343434"></div><div style="left:648px;top:420px;width:2px;height:34px;background:#343434"></div><div style="left:648px;top:458px;width:2px;height:34px;background:#343434"></div><div style="left:648px;top:496px;width:2px;height:34px;background:#343434"></div><div style="left:648px;top:534px;width:2px;height:34px;background:#343434"></div><div style="left:648px;top:572px;width:2px;height:172px;background:#343434"></div><div style="left:648px;top:748px;width:2px;height:418px;background:#343434"></div><div style="left:648px;top:1172px;width:2px;height:34px;background:#343434"></div><div style="left:648px;top:1210px;width:2px;height:34px;background:#343434"></div><div style="left:648px;top:1248px;width:2px;height:34px;background:#4a4a4a"></div><div style="left:682px;top:167px;width:2px;height:49px;background:#343434"></div><div style="left:682px;top:230px;width:2px;height:34px;background:#343434"></div><div style="left:682px;top:268px;width:2px;height:34px;background:#343434"></div><div style="left:682px;top:306px;width:2px;height:34px;background:#343434"></div><div style="left:682px;top:344px;width:2px;height:34px;background:#343434"></div><div style="left:682px;top:382px;width:2px;height:34px;background:#343434"></div><div style="left:682px;top:420px;width:2px;height:34px;background:#343434"></div><div style="left:682px;top:458px;width:2px;height:34px;background:#343434"></div><div style="left:682px;top:496px;width:2px;height:34px;background:#343434"></div><div style="left:682px;top:534px;width:2px;height:34px;background:#343434"></div><div style="left:682px;top:572px;width:2px;height:172px;background:#343434"></div><div style="left:682px;top:748px;width:2px;height:418px;background:#343434"></div><div style="left:682px;top:1172px;width:2px;height:34px;background:#343434"></div><div style="left:682px;top:1210px;width:2px;height:34px;background:#343434"></div><div style="left:682px;top:1248px;width:2px;height:34px;background:#4a4a4a"></div><div style="left:716px;top:167px;width:2px;height:49px;background:#343434"></div><div style="left:716px;top:230px;width:2px;height:34px;background:#343434"></div><div style="left:716px;top:268px;width:2px;height:34px;background:#343434"></div><div style="left:716px;top:306px;width:2px;height:34px;background:#343434"></div><div style="left:716px;top:344px;width:2px;height:34px;background:#343434"></div><div style="left:716px;top:382px;width:2px;height:34px;background:#343434"></div><div style="left:716px;top:420px;width:2px;height:34px;background:#343434"></div><div style="left:716px;top:458px;width:2px;height:34px;background:#343434"></div><div style="left:716px;top:496px;width:2px;height:34px;background:#343434"></div><div style="left:716px;top:534px;width:2px;height:34px;background:#343434"></div><div style="left:716px;top:572px;width:2px;height:172px;background:#343434"></div><div style="left:716px;top:748px;width:2px;height:418px;background:#343434"></div><div style="left:716px;top:1172px;width:2px;height:34px;background:#343434"></div><div style="left:716px;top:1210px;width:2px;height:34px;background:#343434"></div><div style="left:716px;top:1248px;width:2px;height:34px;background:#4a4a4a"></div><div style="left:750px;top:167px;width:2px;height:49px;background:#343434"></div><div style="left:750px;top:230px;width:2px;height:34px;background:#343434"></div><div style="left:750px;top:268px;width:2px;height:34px;background:#343434"></div><div style="left:750px;top:306px;width:2px;height:34px;background:#343434"></div><div style="left:750px;top:344px;width:2px;height:34px;background:#343434"></div><div style="left:750px;top:382px;width:2px;height:34px;background:#343434"></div><div style="left:750px;top:420px;width:2px;height:34px;background:#343434"></div><div style="left:750px;top:458px;width:2px;height:34px;background:#343434"></div><div style="left:750px;top:496px;width:2px;height:34px;background:#343434"></div><div style="left:750px;top:534px;width:2px;height:34px;background:#343434"></div><div style="left:750px;top:572px;width:2px;height:172px;background:#343434"></div><div style="left:750px;top:748px;width:2px;height:418px;background:#343434"></div><div style="left:750px;top:1172px;width:2px;height:34px;background:#343434"></div><div style="left:750px;top:1210px;width:2px;height:34px;background:#343434"></div><div style="left:750px;top:1248px;width:2px;height:34px;background:#4a4a4a"></div><div style="left:784px;top:167px;width:2px;height:49px;background:#343434"></div><div style="left:784px;top:230px;width:2px;height:34px;background:#343434"></div><div style="left:784px;top:268px;width:2px;height:34px;background:#343434"></div><div style="left:784px;top:306px;width:2px;height:34px;background:#343434"></div><div style="left:784px;top:344px;width:2px;height:34px;background:#343434"></div><div style="left:784px;top:382px;width:2px;height:34px;background:#343434"></div><div style="left:784px;top:420px;width:2px;height:34px;background:#343434"></div><div style="left:784px;top:458px;width:2px;height:34px;background:#343434"></div><div style="left:784px;top:496px;width:2px;height:34px;background:#343434"></div><div style="left:784px;top:534px;width:2px;height:34px;background:#343434"></div><div style="left:784px;top:572px;width:2px;height:172px;background:#343434"></div><div style="left:784px;top:748px;width:2px;height:418px;background:#343434"></div><div style="left:784px;top:1172px;width:2px;height:34px;background:#343434"></div><div style="left:784px;top:1210px;width:2px;height:34px;background:#343434"></div><div style="left:784px;top:1248px;width:2px;height:34px;background:#4a4a4a"></div><div style="left:818px;top:167px;width:2px;height:49px;background:#343434"></div><div style="left:818px;top:230px;width:2px;height:34px;background:#343434"></div><div style="left:818px;top:268px;width:2px;height:34px;background:#343434"></div><div style="left:818px;top:306px;width:2px;height:34px;background:#343434"></div><div style="left:818px;top:344px;width:2px;height:34px;background:#343434"></div><div style="left:818px;top:382px;width:2px;height:34px;background:#343434"></div><div style="left:818px;top:420px;width:2px;height:34px;background:#343434"></div><div style="left:818px;top:458px;width:2px;height:34px;background:#343434"></div><div style="left:818px;top:496px;width:2px;height:34px;background:#343434"></div><div style="left:818px;top:534px;width:2px;height:34px;background:#343434"></div><div style="left:818px;top:572px;width:2px;height:172px;background:#343434"></div><div style="left:818px;top:748px;width:2px;height:418px;background:#343434"></div><div style="left:818px;top:1172px;width:2px;height:34px;background:#343434"></div><div style="left:818px;top:1210px;width:2px;height:34px;background:#343434"></div><div style="left:818px;top:1248px;width:2px;height:34px;background:#4a4a4a"></div><div style="left:852px;top:167px;width:2px;height:49px;background:#343434"></div><div style="left:852px;top:230px;width:2px;height:34px;background:#343434"></div><div style="left:852px;top:268px;width:2px;height:34px;background:#343434"></div><div style="left:852px;top:306px;width:2px;height:34px;background:#343434"></div><div style="left:852px;top:344px;width:2px;height:34px;background:#343434"></div><div style="left:852px;top:382px;width:2px;height:34px;background:#343434"></div><div style="left:852px;top:420px;width:2px;height:34px;background:#343434"></div><div style="left:852px;top:458px;width:2px;height:34px;background:#343434"></div><div style="left:852px;top:496px;width:2px;height:34px;background:#343434"></div><div style="left:852px;top:534px;width:2px;height:34px;background:#343434"></div><div style="left:852px;top:572px;width:2px;height:172px;background:#343434"></div><div style="left:852px;top:748px;width:2px;height:418px;background:#343434"></div><div style="left:852px;top:1172px;width:2px;height:34px;background:#343434"></div><div style="left:852px;top:1210px;width:2px;height:34px;background:#343434"></div><div style="left:852px;top:1248px;width:2px;height:34px;background:#4a4a4a"></div><div style="left:886px;top:167px;width:2px;height:49px;background:#343434"></div><div style="left:886px;top:230px;width:2px;height:34px;background:#343434"></div><div style="left:886px;top:268px;width:2px;height:34px;background:#343434"></div><div style="left:886px;top:306px;width:2px;height:34px;background:#343434"></div><div style="left:886px;top:344px;width:2px;height:34px;background:#343434"></div><div style="left:886px;top:382px;width:2px;height:34px;background:#343434"></div><div style="left:886px;top:420px;width:2px;height:34px;background:#343434"></div><div style="left:886px;top:458px;width:2px;height:34px;background:#343434"></div><div style="left:886px;top:496px;width:2px;height:34px;background:#343434"></div><div style="left:886px;top:534px;width:2px;height:34px;background:#343434"></div><div style="left:886px;top:572px;width:2px;height:172px;background:#343434"></div><div style="left:886px;top:748px;width:2px;height:418px;background:#343434"></div><div style="left:886px;top:1172px;width:2px;height:34px;background:#343434"></div><div style="left:886px;top:1210px;width:2px;height:34px;background:#343434"></div><div style="left:886px;top:1248px;width:2px;height:34px;background:#4a4a4a"></div><div style="left:920px;top:167px;width:2px;height:49px;background:#343434"></div><div style="left:920px;top:230px;width:2px;height:34px;background:#343434"></div><div style="left:920px;top:268px;width:2px;height:34px;background:#343434"></div><div style="left:920px;top:306px;width:2px;height:34px;background:#343434"></div><div style="left:920px;top:344px;width:2px;height:34px;background:#343434"></div><div style="left:920px;top:382px;width:2px;height:34px;background:#343434"></div><div style="left:920px;top:420px;width:2px;height:34px;background:#343434"></div><div style="left:920px;top:458px;width:2px;height:34px;background:#343434"></div><div style="left:920px;top:496px;width:2px;height:34px;background:#343434"></div><div style="left:920px;top:534px;width:2px;height:34px;background:#343434"></div><div style="left:920px;top:572px;width:2px;height:172px;background:#343434"></div><div style="left:920px;top:748px;width:2px;height:418px;background:#343434"></div><div style="left:920px;top:1172px;width:2px;height:34px;background:#343434"></div><div style="left:920px;top:1210px;width:2px;height:34px;background:#343434"></div><div style="left:920px;top:1248px;width:2px;height:34px;background:#4a4a4a"></div><div style="left:954px;top:167px;width:2px;height:49px;background:#343434"></div><div style="left:954px;top:230px;width:2px;height:34px;background:#343434"></div><div style="left:954px;top:268px;width:2px;height:34px;background:#343434"></div><div style="left:954px;top:306px;width:2px;height:34px;background:#343434"></div><div style="left:954px;top:344px;width:2px;height:34px;background:#343434"></div><div style="left:954px;top:382px;width:2px;height:34px;background:#343434"></div><div style="left:954px;top:420px;width:2px;height:34px;background:#343434"></div><div style="left:954px;top:458px;width:2px;height:34px;background:#343434"></div><div style="left:954px;top:496px;width:2px;height:34px;background:#343434"></div><div style="left:954px;top:534px;width:2px;height:34px;background:#343434"></div><div style="left:954px;top:572px;width:2px;height:172px;background:#343434"></div><div style="left:954px;top:748px;width:2px;height:418px;background:#343434"></div><div style="left:954px;top:1172px;width:2px;height:34px;background:#343434"></div><div style="left:954px;top:1210px;width:2px;height:34px;background:#343434"></div><div style="left:954px;top:1248px;width:2px;height:34px;background:#4a4a4a"></div><div style="left:988px;top:167px;width:2px;height:49px;background:#343434"></div><div style="left:988px;top:230px;width:2px;height:34px;background:#343434"></div><div style="left:988px;top:268px;width:2px;height:34px;background:#343434"></div><div style="left:988px;top:306px;width:2px;height:34px;background:#343434"></div><div style="left:988px;top:344px;width:2px;height:34px;background:#343434"></div><div style="left:988px;top:382px;width:2px;height:34px;background:#343434"></div><div style="left:988px;top:420px;width:2px;height:34px;background:#343434"></div><div style="left:988px;top:458px;width:2px;height:34px;background:#343434"></div><div style="left:988px;top:496px;width:2px;height:34px;background:#343434"></div><div style="left:988px;top:534px;width:2px;height:34px;background:#343434"></div><div style="left:988px;top:572px;width:2px;height:172px;background:#343434"></div><div style="left:988px;top:748px;width:2px;height:418px;background:#343434"></div><div style="left:988px;top:1172px;width:2px;height:34px;background:#343434"></div><div style="left:988px;top:1210px;width:2px;height:34px;background:#343434"></div><div style="left:988px;top:1248px;width:2px;height:34px;background:#4a4a4a"></div><div style="left:71px;top:230px;width:204px;height:34px;background:#b67ac7;border-top:2px solid #8c5c9c;border-bottom:2px solid #8c5c9c;box-sizing:border-box"></div><svg style="left:71px;top:230px" width="204" height="34"><path d="M17.0 2 v6 M17.0 26 v6 M34.0 2 v6 M34.0 26 v6 M51.0 2 v6 M51.0 26 v6 M68.0 2 v6 M68.0 26 v6 M85.0 2 v6 M85.0 26 v6 M102.0 2 v6 M102.0 26 v6 M119.0 2 v6 M119.0 26 v6 M136.0 2 v6 M136.0 26 v6 M153.0 2 v6 M153.0 26 v6 M170.0 2 v6 M170.0 26 v6 M187.0 2 v6 M187.0 26 v6 " stroke="#111" stroke-width="2"/></svg><div style="left:343px;top:230px;width:204px;height:34px;background:#b67ac7;border-top:2px solid #8c5c9c;border-bottom:2px solid #8c5c9c;box-sizing:border-box"></div><svg style="left:343px;top:230px" width="204" height="34"><path d="M17.0 2 v6 M17.0 26 v6 M34.0 2 v6 M34.0 26 v6 M51.0 2 v6 M51.0 26 v6 M68.0 2 v6 M68.0 26 v6 M85.0 2 v6 M85.0 26 v6 M102.0 2 v6 M102.0 26 v6 M119.0 2 v6 M119.0 26 v6 M136.0 2 v6 M136.0 26 v6 M153.0 2 v6 M153.0 26 v6 M170.0 2 v6 M170.0 26 v6 M187.0 2 v6 M187.0 26 v6 " stroke="#111" stroke-width="2"/></svg><div style="left:615px;top:230px;width:272px;height:34px;background:#b67ac7;border-top:2px solid #8c5c9c;border-bottom:2px solid #8c5c9c;box-sizing:border-box"></div><svg style="left:615px;top:230px" width="272" height="34"><path d="M17.0 2 v6 M17.0 26 v6 M34.0 2 v6 M34.0 26 v6 M51.0 2 v6 M51.0 26 v6 M68.0 2 v6 M68.0 26 v6 M85.0 2 v6 M85.0 26 v6 M102.0 2 v6 M102.0 26 v6 M119.0 2 v6 M119.0 26 v6 M136.0 2 v6 M136.0 26 v6 M153.0 2 v6 M153.0 26 v6 M170.0 2 v6 M170.0 26 v6 M187.0 2 v6 M187.0 26 v6 M204.0 2 v6 M204.0 26 v6 M221.0 2 v6 M221.0 26 v6 M238.0 2 v6 M238.0 26 v6 M255.0 2 v6 M255.0 26 v6 " stroke="#111" stroke-width="2"/></svg><div style="left:139px;top:268px;width:68px;height:34px;background:#b67ac7;border-top:2px solid #8c5c9c;border-bottom:2px solid #8c5c9c;box-sizing:border-box"></div><svg style="left:139px;top:268px" width="68" height="34"><path d="M17.0 2 v6 M17.0 26 v6 M34.0 2 v6 M34.0 26 v6 M51.0 2 v6 M51.0 26 v6 " stroke="#111" stroke-width="2"/></svg><div style="left:275px;top:268px;width:204px;height:34px;background:#b67ac7;border-top:2px solid #8c5c9c;border-bottom:2px solid #8c5c9c;box-sizing:border-box"></div><svg style="left:275px;top:268px" width="204" height="34"><path d="M17.0 2 v6 M17.0 26 v6 M34.0 2 v6 M34.0 26 v6 M51.0 2 v6 M51.0 26 v6 M68.0 2 v6 M68.0 26 v6 M85.0 2 v6 M85.0 26 v6 M102.0 2 v6 M102.0 26 v6 M119.0 2 v6 M119.0 26 v6 M136.0 2 v6 M136.0 26 v6 M153.0 2 v6 M153.0 26 v6 M170.0 2 v6 M170.0 26 v6 M187.0 2 v6 M187.0 26 v6 " stroke="#111" stroke-width="2"/></svg><div style="left:547px;top:268px;width:340px;height:34px;background:#b67ac7;border-top:2px solid #8c5c9c;border-bottom:2px solid #8c5c9c;box-sizing:border-box"></div><svg style="left:547px;top:268px" width="340" height="34"><path d="M17.0 2 v6 M17.0 26 v6 M34.0 2 v6 M34.0 26 v6 M51.0 2 v6 M51.0 26 v6 M68.0 2 v6 M68.0 26 v6 M85.0 2 v6 M85.0 26 v6 M102.0 2 v6 M102.0 26 v6 M119.0 2 v6 M119.0 26 v6 M136.0 2 v6 M136.0 26 v6 M153.0 2 v6 M153.0 26 v6 M170.0 2 v6 M170.0 26 v6 M187.0 2 v6 M187.0 26 v6 M204.0 2 v6 M204.0 26 v6 M221.0 2 v6 M221.0 26 v6 M238.0 2 v6 M238.0 26 v6 M255.0 2 v6 M255.0 26 v6 M272.0 2 v6 M272.0 26 v6 M289.0 2 v6 M289.0 26 v6 M306.0 2 v6 M306.0 26 v6 M323.0 2 v6 M323.0 26 v6 " stroke="#111" stroke-width="2"/></svg><div style="left:275px;top:306px;width:612px;height:34px;background:#b67ac7;border-top:2px solid #8c5c9c;border-bottom:2px solid #8c5c9c;box-sizing:border-box"></div><svg style="left:275px;top:306px" width="612" height="34"><path d="M17.0 2 v6 M17.0 26 v6 M34.0 2 v6 M34.0 26 v6 M51.0 2 v6 M51.0 26 v6 M68.0 2 v6 M68.0 26 v6 M85.0 2 v6 M85.0 26 v6 M102.0 2 v6 M102.0 26 v6 M119.0 2 v6 M119.0 26 v6 M136.0 2 v6 M136.0 26 v6 M153.0 2 v6 M153.0 26 v6 M170.0 2 v6 M170.0 26 v6 M187.0 2 v6 M187.0 26 v6 M204.0 2 v6 M204.0 26 v6 M221.0 2 v6 M221.0 26 v6 M238.0 2 v6 M238.0 26 v6 M255.0 2 v6 M255.0 26 v6 M272.0 2 v6 M272.0 26 v6 M289.0 2 v6 M289.0 26 v6 M306.0 2 v6 M306.0 26 v6 M323.0 2 v6 M323.0 26 v6 M340.0 2 v6 M340.0 26 v6 M357.0 2 v6 M357.0 26 v6 M374.0 2 v6 M374.0 26 v6 M391.0 2 v6 M391.0 26 v6 M408.0 2 v6 M408.0 26 v6 M425.0 2 v6 M425.0 26 v6 M442.0 2 v6 M442.0 26 v6 M459.0 2 v6 M459.0 26 v6 M476.0 2 v6 M476.0 26 v6 M493.0 2 v6 M493.0 26 v6 M510.0 2 v6 M510.0 26 v6 M527.0 2 v6 M527.0 26 v6 M544.0 2 v6 M544.0 26 v6 M561.0 2 v6 M561.0 26 v6 M578.0 2 v6 M578.0 26 v6 M595.0 2 v6 M595.0 26 v6 " stroke="#111" stroke-width="2"/></svg><div style="left:207px;top:344px;width:68px;height:34px;background:#b67ac7;border-top:2px solid #8c5c9c;border-bottom:2px solid #8c5c9c;box-sizing:border-box"></div><svg style="left:207px;top:344px" width="68" height="34"><path d="M17.0 2 v6 M17.0 26 v6 M34.0 2 v6 M34.0 26 v6 M51.0 2 v6 M51.0 26 v6 " stroke="#111" stroke-width="2"/></svg><div style="left:343px;top:344px;width:136px;height:34px;background:#b67ac7;border-top:2px solid #8c5c9c;border-bottom:2px solid #8c5c9c;box-sizing:border-box"></div><svg style="left:343px;top:344px" width="136" height="34"><path d="M17.0 2 v6 M17.0 26 v6 M34.0 2 v6 M34.0 26 v6 M51.0 2 v6 M51.0 26 v6 M68.0 2 v6 M68.0 26 v6 M85.0 2 v6 M85.0 26 v6 M102.0 2 v6 M102.0 26 v6 M119.0 2 v6 M119.0 26 v6 " stroke="#111" stroke-width="2"/></svg><div style="left:513px;top:344px;width:477px;height:34px;background:#b67ac7;border-top:2px solid #8c5c9c;border-bottom:2px solid #8c5c9c;box-sizing:border-box"></div><svg style="left:513px;top:344px" width="477" height="34"><path d="M17.0 2 v6 M17.0 26 v6 M34.0 2 v6 M34.0 26 v6 M51.0 2 v6 M51.0 26 v6 M68.0 2 v6 M68.0 26 v6 M85.0 2 v6 M85.0 26 v6 M102.0 2 v6 M102.0 26 v6 M119.0 2 v6 M119.0 26 v6 M136.0 2 v6 M136.0 26 v6 M153.0 2 v6 M153.0 26 v6 M170.0 2 v6 M170.0 26 v6 M187.0 2 v6 M187.0 26 v6 M204.0 2 v6 M204.0 26 v6 M221.0 2 v6 M221.0 26 v6 M238.0 2 v6 M238.0 26 v6 M255.0 2 v6 M255.0 26 v6 M272.0 2 v6 M272.0 26 v6 M289.0 2 v6 M289.0 26 v6 M306.0 2 v6 M306.0 26 v6 M323.0 2 v6 M323.0 26 v6 M340.0 2 v6 M340.0 26 v6 M357.0 2 v6 M357.0 26 v6 M374.0 2 v6 M374.0 26 v6 M391.0 2 v6 M391.0 26 v6 M408.0 2 v6 M408.0 26 v6 M425.0 2 v6 M425.0 26 v6 M442.0 2 v6 M442.0 26 v6 M459.0 2 v6 M459.0 26 v6 " stroke="#111" stroke-width="2"/></svg><div style="left:275px;top:382px;width:204px;height:34px;background:#b67ac7;border-top:2px solid #8c5c9c;border-bottom:2px solid #8c5c9c;box-sizing:border-box"></div><svg style="left:275px;top:382px" width="204" height="34"><path d="M17.0 2 v6 M17.0 26 v6 M34.0 2 v6 M34.0 26 v6 M51.0 2 v6 M51.0 26 v6 M68.0 2 v6 M68.0 26 v6 M85.0 2 v6 M85.0 26 v6 M102.0 2 v6 M102.0 26 v6 M119.0 2 v6 M119.0 26 v6 M136.0 2 v6 M136.0 26 v6 M153.0 2 v6 M153.0 26 v6 M170.0 2 v6 M170.0 26 v6 M187.0 2 v6 M187.0 26 v6 " stroke="#111" stroke-width="2"/></svg><div style="left:547px;top:382px;width:443px;height:34px;background:#b67ac7;border-top:2px solid #8c5c9c;border-bottom:2px solid #8c5c9c;box-sizing:border-box"></div><svg style="left:547px;top:382px" width="443" height="34"><path d="M17.0 2 v6 M17.0 26 v6 M34.0 2 v6 M34.0 26 v6 M51.0 2 v6 M51.0 26 v6 M68.0 2 v6 M68.0 26 v6 M85.0 2 v6 M85.0 26 v6 M102.0 2 v6 M102.0 26 v6 M119.0 2 v6 M119.0 26 v6 M136.0 2 v6 M136.0 26 v6 M153.0 2 v6 M153.0 26 v6 M170.0 2 v6 M170.0 26 v6 M187.0 2 v6 M187.0 26 v6 M204.0 2 v6 M204.0 26 v6 M221.0 2 v6 M221.0 26 v6 M238.0 2 v6 M238.0 26 v6 M255.0 2 v6 M255.0 26 v6 M272.0 2 v6 M272.0 26 v6 M289.0 2 v6 M289.0 26 v6 M306.0 2 v6 M306.0 26 v6 M323.0 2 v6 M323.0 26 v6 M340.0 2 v6 M340.0 26 v6 M357.0 2 v6 M357.0 26 v6 M374.0 2 v6 M374.0 26 v6 M391.0 2 v6 M391.0 26 v6 M408.0 2 v6 M408.0 26 v6 M425.0 2 v6 M425.0 26 v6 " stroke="#111" stroke-width="2"/></svg><div style="left:207px;top:420px;width:136px;height:34px;background:#b67ac7;border-top:2px solid #8c5c9c;border-bottom:2px solid #8c5c9c;box-sizing:border-box"></div><svg style="left:207px;top:420px" width="136" height="34"><path d="M17.0 2 v6 M17.0 26 v6 M34.0 2 v6 M34.0 26 v6 M51.0 2 v6 M51.0 26 v6 M68.0 2 v6 M68.0 26 v6 M85.0 2 v6 M85.0 26 v6 M102.0 2 v6 M102.0 26 v6 M119.0 2 v6 M119.0 26 v6 " stroke="#111" stroke-width="2"/></svg><div style="left:479px;top:420px;width:511px;height:34px;background:#b67ac7;border-top:2px solid #8c5c9c;border-bottom:2px solid #8c5c9c;box-sizing:border-box"></div><svg style="left:479px;top:420px" width="511" height="34"><path d="M17.0 2 v6 M17.0 26 v6 M34.0 2 v6 M34.0 26 v6 M51.0 2 v6 M51.0 26 v6 M68.0 2 v6 M68.0 26 v6 M85.0 2 v6 M85.0 26 v6 M102.0 2 v6 M102.0 26 v6 M119.0 2 v6 M119.0 26 v6 M136.0 2 v6 M136.0 26 v6 M153.0 2 v6 M153.0 26 v6 M170.0 2 v6 M170.0 26 v6 M187.0 2 v6 M187.0 26 v6 M204.0 2 v6 M204.0 26 v6 M221.0 2 v6 M221.0 26 v6 M238.0 2 v6 M238.0 26 v6 M255.0 2 v6 M255.0 26 v6 M272.0 2 v6 M272.0 26 v6 M289.0 2 v6 M289.0 26 v6 M306.0 2 v6 M306.0 26 v6 M323.0 2 v6 M323.0 26 v6 M340.0 2 v6 M340.0 26 v6 M357.0 2 v6 M357.0 26 v6 M374.0 2 v6 M374.0 26 v6 M391.0 2 v6 M391.0 26 v6 M408.0 2 v6 M408.0 26 v6 M425.0 2 v6 M425.0 26 v6 M442.0 2 v6 M442.0 26 v6 M459.0 2 v6 M459.0 26 v6 M476.0 2 v6 M476.0 26 v6 M493.0 2 v6 M493.0 26 v6 " stroke="#111" stroke-width="2"/></svg><div style="left:139px;top:458px;width:136px;height:34px;background:#b67ac7;border-top:2px solid #8c5c9c;border-bottom:2px solid #8c5c9c;box-sizing:border-box"></div><svg style="left:139px;top:458px" width="136" height="34"><path d="M17.0 2 v6 M17.0 26 v6 M34.0 2 v6 M34.0 26 v6 M51.0 2 v6 M51.0 26 v6 M68.0 2 v6 M68.0 26 v6 M85.0 2 v6 M85.0 26 v6 M102.0 2 v6 M102.0 26 v6 M119.0 2 v6 M119.0 26 v6 " stroke="#111" stroke-width="2"/></svg><div style="left:343px;top:458px;width:136px;height:34px;background:#b67ac7;border-top:2px solid #8c5c9c;border-bottom:2px solid #8c5c9c;box-sizing:border-box"></div><svg style="left:343px;top:458px" width="136" height="34"><path d="M17.0 2 v6 M17.0 26 v6 M34.0 2 v6 M34.0 26 v6 M51.0 2 v6 M51.0 26 v6 M68.0 2 v6 M68.0 26 v6 M85.0 2 v6 M85.0 26 v6 M102.0 2 v6 M102.0 26 v6 M119.0 2 v6 M119.0 26 v6 " stroke="#111" stroke-width="2"/></svg><div style="left:547px;top:458px;width:68px;height:34px;background:#b67ac7;border-top:2px solid #8c5c9c;border-bottom:2px solid #8c5c9c;box-sizing:border-box"></div><svg style="left:547px;top:458px" width="68" height="34"><path d="M17.0 2 v6 M17.0 26 v6 M34.0 2 v6 M34.0 26 v6 M51.0 2 v6 M51.0 26 v6 " stroke="#111" stroke-width="2"/></svg><div style="left:751px;top:458px;width:136px;height:34px;background:#b67ac7;border-top:2px solid #8c5c9c;border-bottom:2px solid #8c5c9c;box-sizing:border-box"></div><svg style="left:751px;top:458px" width="136" height="34"><path d="M17.0 2 v6 M17.0 26 v6 M34.0 2 v6 M34.0 26 v6 M51.0 2 v6 M51.0 26 v6 M68.0 2 v6 M68.0 26 v6 M85.0 2 v6 M85.0 26 v6 M102.0 2 v6 M102.0 26 v6 M119.0 2 v6 M119.0 26 v6 " stroke="#111" stroke-width="2"/></svg><div style="left:343px;top:496px;width:136px;height:34px;background:#b67ac7;border-top:2px solid #8c5c9c;border-bottom:2px solid #8c5c9c;box-sizing:border-box"></div><svg style="left:343px;top:496px" width="136" height="34"><path d="M17.0 2 v6 M17.0 26 v6 M34.0 2 v6 M34.0 26 v6 M51.0 2 v6 M51.0 26 v6 M68.0 2 v6 M68.0 26 v6 M85.0 2 v6 M85.0 26 v6 M102.0 2 v6 M102.0 26 v6 M119.0 2 v6 M119.0 26 v6 " stroke="#111" stroke-width="2"/></svg><div style="left:615px;top:496px;width:272px;height:34px;background:#b67ac7;border-top:2px solid #8c5c9c;border-bottom:2px solid #8c5c9c;box-sizing:border-box"></div><svg style="left:615px;top:496px" width="272" height="34"><path d="M17.0 2 v6 M17.0 26 v6 M34.0 2 v6 M34.0 26 v6 M51.0 2 v6 M51.0 26 v6 M68.0 2 v6 M68.0 26 v6 M85.0 2 v6 M85.0 26 v6 M102.0 2 v6 M102.0 26 v6 M119.0 2 v6 M119.0 26 v6 M136.0 2 v6 M136.0 26 v6 M153.0 2 v6 M153.0 26 v6 M170.0 2 v6 M170.0 26 v6 M187.0 2 v6 M187.0 26 v6 M204.0 2 v6 M204.0 26 v6 M221.0 2 v6 M221.0 26 v6 M238.0 2 v6 M238.0 26 v6 M255.0 2 v6 M255.0 26 v6 " stroke="#111" stroke-width="2"/></svg><div style="left:207px;top:534px;width:680px;height:34px;background:#f6f07a;border-top:2px solid #c8c26a;border-bottom:2px solid #c8c26a;box-sizing:border-box"></div><svg style="left:207px;top:534px" width="680" height="34"><path d="M8.5 2.5 v5.5 M8.5 26 v5.5 M17.0 2.5 v5.5 M17.0 26 v5.5 M25.5 2.5 v5.5 M25.5 26 v5.5 M34.0 2.5 v5.5 M34.0 26 v5.5 M42.5 2.5 v5.5 M42.5 26 v5.5 M51.0 2.5 v5.5 M51.0 26 v5.5 M59.5 2.5 v5.5 M59.5 26 v5.5 M68.0 2.5 v5.5 M68.0 26 v5.5 M76.5 2.5 v5.5 M76.5 26 v5.5 M85.0 2.5 v5.5 M85.0 26 v5.5 M93.5 2.5 v5.5 M93.5 26 v5.5 M102.0 2.5 v5.5 M102.0 26 v5.5 M110.5 2.5 v5.5 M110.5 26 v5.5 M119.0 2.5 v5.5 M119.0 26 v5.5 M127.5 2.5 v5.5 M127.5 26 v5.5 M136.0 2.5 v5.5 M136.0 26 v5.5 M144.5 2.5 v5.5 M144.5 26 v5.5 M153.0 2.5 v5.5 M153.0 26 v5.5 M161.5 2.5 v5.5 M161.5 26 v5.5 M170.0 2.5 v5.5 M170.0 26 v5.5 M178.5 2.5 v5.5 M178.5 26 v5.5 M187.0 2.5 v5.5 M187.0 26 v5.5 M195.5 2.5 v5.5 M195.5 26 v5.5 M204.0 2.5 v5.5 M204.0 26 v5.5 M212.5 2.5 v5.5 M212.5 26 v5.5 M221.0 2.5 v5.5 M221.0 26 v5.5 M229.5 2.5 v5.5 M229.5 26 v5.5 M238.0 2.5 v5.5 M238.0 26 v5.5 M246.5 2.5 v5.5 M246.5 26 v5.5 M255.0 2.5 v5.5 M255.0 26 v5.5 M263.5 2.5 v5.5 M263.5 26 v5.5 M272.0 2.5 v5.5 M272.0 26 v5.5 M280.5 2.5 v5.5 M280.5 26 v5.5 M289.0 2.5 v5.5 M289.0 26 v5.5 M297.5 2.5 v5.5 M297.5 26 v5.5 M306.0 2.5 v5.5 M306.0 26 v5.5 M314.5 2.5 v5.5 M314.5 26 v5.5 M323.0 2.5 v5.5 M323.0 26 v5.5 M331.5 2.5 v5.5 M331.5 26 v5.5 M340.0 2.5 v5.5 M340.0 26 v5.5 M348.5 2.5 v5.5 M348.5 26 v5.5 M357.0 2.5 v5.5 M357.0 26 v5.5 M365.5 2.5 v5.5 M365.5 26 v5.5 M374.0 2.5 v5.5 M374.0 26 v5.5 M382.5 2.5 v5.5 M382.5 26 v5.5 M391.0 2.5 v5.5 M391.0 26 v5.5 M399.5 2.5 v5.5 M399.5 26 v5.5 M408.0 2.5 v5.5 M408.0 26 v5.5 M416.5 2.5 v5.5 M416.5 26 v5.5 M425.0 2.5 v5.5 M425.0 26 v5.5 M433.5 2.5 v5.5 M433.5 26 v5.5 M442.0 2.5 v5.5 M442.0 26 v5.5 M450.5 2.5 v5.5 M450.5 26 v5.5 M459.0 2.5 v5.5 M459.0 26 v5.5 M467.5 2.5 v5.5 M467.5 26 v5.5 M476.0 2.5 v5.5 M476.0 26 v5.5 M484.5 2.5 v5.5 M484.5 26 v5.5 M493.0 2.5 v5.5 M493.0 26 v5.5 M501.5 2.5 v5.5 M501.5 26 v5.5 M510.0 2.5 v5.5 M510.0 26 v5.5 M518.5 2.5 v5.5 M518.5 26 v5.5 M527.0 2.5 v5.5 M527.0 26 v5.5 M535.5 2.5 v5.5 M535.5 26 v5.5 M544.0 2.5 v5.5 M544.0 26 v5.5 M552.5 2.5 v5.5 M552.5 26 v5.5 M561.0 2.5 v5.5 M561.0 26 v5.5 M569.5 2.5 v5.5 M569.5 26 v5.5 M578.0 2.5 v5.5 M578.0 26 v5.5 M586.5 2.5 v5.5 M586.5 26 v5.5 M595.0 2.5 v5.5 M595.0 26 v5.5 M603.5 2.5 v5.5 M603.5 26 v5.5 M612.0 2.5 v5.5 M612.0 26 v5.5 M620.5 2.5 v5.5 M620.5 26 v5.5 M629.0 2.5 v5.5 M629.0 26 v5.5 M637.5 2.5 v5.5 M637.5 26 v5.5 M646.0 2.5 v5.5 M646.0 26 v5.5 M654.5 2.5 v5.5 M654.5 26 v5.5 M663.0 2.5 v5.5 M663.0 26 v5.5 M671.5 2.5 v5.5 M671.5 26 v5.5 " stroke="#111" stroke-width="2"/></svg><div style="left:71px;top:572px;width:204px;height:172px;background:#d09a2a;border-top:2px solid #a67c24;box-sizing:border-box"></div><div style="left:71px;top:605px;width:204px;height:2px;background:#a87c22"></div><svg style="left:71px;top:572px" width="204" height="172"><path d="M34 35 V172 M68 35 V172 M102 35 V172 M136 35 V172 M170 35 V172 " stroke="#a37a22" stroke-width="2"/><rect x="17" y="80" width="8" height="6" fill="#20180a"/><rect x="41" y="80" width="14" height="6" fill="#20180a"/><rect x="57" y="80" width="10" height="6" fill="#20180a"/><rect x="17" y="92" width="8" height="12" fill="#20180a"/><rect x="27" y="92" width="14" height="12" fill="#20180a"/><rect x="1" y="98" width="16" height="6" fill="#20180a"/><rect x="43" y="98" width="12" height="6" fill="#20180a"/><rect x="57" y="98" width="10" height="6" fill="#20180a"/><rect x="1" y="110" width="16" height="6" fill="#20180a"/><rect x="41" y="110" width="14" height="6" fill="#20180a"/><rect x="1" y="122" width="16" height="6" fill="#20180a"/><rect x="19" y="122" width="6" height="6" fill="#20180a"/><rect x="27" y="122" width="14" height="6" fill="#20180a"/><rect x="57" y="122" width="10" height="12" fill="#20180a"/><rect x="41" y="128" width="14" height="6" fill="#20180a"/><rect x="1" y="140" width="16" height="6" fill="#20180a"/><rect x="25" y="140" width="16" height="6" fill="#20180a"/><rect x="85" y="80" width="8" height="6" fill="#20180a"/><rect x="109" y="80" width="14" height="6" fill="#20180a"/><rect x="125" y="80" width="10" height="6" fill="#20180a"/><rect x="85" y="92" width="8" height="12" fill="#20180a"/><rect x="95" y="92" width="14" height="12" fill="#20180a"/><rect x="69" y="98" width="16" height="6" fill="#20180a"/><rect x="111" y="98" width="12" height="6" fill="#20180a"/><rect x="125" y="98" width="10" height="6" fill="#20180a"/><rect x="69" y="110" width="16" height="6" fill="#20180a"/><rect x="109" y="110" width="14" height="6" fill="#20180a"/><rect x="69" y="122" width="16" height="6" fill="#20180a"/><rect x="87" y="122" width="6" height="6" fill="#20180a"/><rect x="95" y="122" width="14" height="6" fill="#20180a"/><rect x="125" y="122" width="10" height="12" fill="#20180a"/><rect x="109" y="128" width="14" height="6" fill="#20180a"/><rect x="69" y="140" width="16" height="6" fill="#20180a"/><rect x="93" y="140" width="16" height="6" fill="#20180a"/><rect x="153" y="80" width="8" height="6" fill="#20180a"/><rect x="177" y="80" width="14" height="6" fill="#20180a"/><rect x="193" y="80" width="10" height="6" fill="#20180a"/><rect x="153" y="92" width="8" height="12" fill="#20180a"/><rect x="163" y="92" width="14" height="12" fill="#20180a"/><rect x="137" y="98" width="16" height="6" fill="#20180a"/><rect x="179" y="98" width="12" height="6" fill="#20180a"/><rect x="193" y="98" width="10" height="6" fill="#20180a"/><rect x="137" y="110" width="16" height="6" fill="#20180a"/><rect x="177" y="110" width="14" height="6" fill="#20180a"/><rect x="137" y="122" width="16" height="6" fill="#20180a"/><rect x="155" y="122" width="6" height="6" fill="#20180a"/><rect x="163" y="122" width="14" height="6" fill="#20180a"/><rect x="193" y="122" width="10" height="12" fill="#20180a"/><rect x="177" y="128" width="14" height="6" fill="#20180a"/><rect x="137" y="140" width="16" height="6" fill="#20180a"/><rect x="161" y="140" width="16" height="6" fill="#20180a"/></svg><div class="t" style="left:75px;top:579.5px;font-size:20px;letter-spacing:1.05px;color:#2e2206;-webkit-text-stroke:0.3px #2e2206;overflow:hidden;width:130px;height:26px">E Minor</div><div class="t" style="left:211px;top:579.5px;font-size:20px;letter-spacing:1.05px;color:#2e2206;-webkit-text-stroke:0.3px #2e2206;overflow:hidden;width:64px;height:26px">E Minor</div><div style="left:343px;top:572px;width:647px;height:172px;background:#d09a2a;border-top:2px solid #a67c24;box-sizing:border-box"></div><div style="left:343px;top:605px;width:647px;height:2px;background:#a87c22"></div><svg style="left:343px;top:572px" width="647" height="172"><path d="M34 35 V172 M68 35 V172 M102 35 V172 M136 35 V172 M170 35 V172 M204 35 V172 M238 35 V172 M272 35 V172 M306 35 V172 M340 35 V172 M374 35 V172 M408 35 V172 M442 35 V172 M476 35 V172 M510 35 V172 M544 35 V172 M578 35 V172 M612 35 V172 M646 35 V172 " stroke="#a37a22" stroke-width="2"/><rect x="17" y="80" width="8" height="6" fill="#20180a"/><rect x="41" y="80" width="14" height="6" fill="#20180a"/><rect x="57" y="80" width="10" height="6" fill="#20180a"/><rect x="17" y="92" width="8" height="12" fill="#20180a"/><rect x="27" y="92" width="14" height="12" fill="#20180a"/><rect x="1" y="98" width="16" height="6" fill="#20180a"/><rect x="43" y="98" width="12" height="6" fill="#20180a"/><rect x="57" y="98" width="10" height="6" fill="#20180a"/><rect x="1" y="110" width="16" height="6" fill="#20180a"/><rect x="41" y="110" width="14" height="6" fill="#20180a"/><rect x="1" y="122" width="16" height="6" fill="#20180a"/><rect x="19" y="122" width="6" height="6" fill="#20180a"/><rect x="27" y="122" width="14" height="6" fill="#20180a"/><rect x="57" y="122" width="10" height="12" fill="#20180a"/><rect x="41" y="128" width="14" height="6" fill="#20180a"/><rect x="1" y="140" width="16" height="6" fill="#20180a"/><rect x="25" y="140" width="16" height="6" fill="#20180a"/><rect x="85" y="80" width="8" height="6" fill="#20180a"/><rect x="109" y="80" width="14" height="6" fill="#20180a"/><rect x="125" y="80" width="10" height="6" fill="#20180a"/><rect x="85" y="92" width="8" height="12" fill="#20180a"/><rect x="95" y="92" width="14" height="12" fill="#20180a"/><rect x="69" y="98" width="16" height="6" fill="#20180a"/><rect x="111" y="98" width="12" height="6" fill="#20180a"/><rect x="125" y="98" width="10" height="6" fill="#20180a"/><rect x="69" y="110" width="16" height="6" fill="#20180a"/><rect x="109" y="110" width="14" height="6" fill="#20180a"/><rect x="69" y="122" width="16" height="6" fill="#20180a"/><rect x="87" y="122" width="6" height="6" fill="#20180a"/><rect x="95" y="122" width="14" height="6" fill="#20180a"/><rect x="125" y="122" width="10" height="12" fill="#20180a"/><rect x="109" y="128" width="14" height="6" fill="#20180a"/><rect x="69" y="140" width="16" height="6" fill="#20180a"/><rect x="93" y="140" width="16" height="6" fill="#20180a"/><rect x="153" y="80" width="8" height="6" fill="#20180a"/><rect x="177" y="80" width="14" height="6" fill="#20180a"/><rect x="193" y="80" width="10" height="6" fill="#20180a"/><rect x="153" y="92" width="8" height="12" fill="#20180a"/><rect x="163" y="92" width="14" height="12" fill="#20180a"/><rect x="137" y="98" width="16" height="6" fill="#20180a"/><rect x="179" y="98" width="12" height="6" fill="#20180a"/><rect x="193" y="98" width="10" height="6" fill="#20180a"/><rect x="137" y="110" width="16" height="6" fill="#20180a"/><rect x="177" y="110" width="14" height="6" fill="#20180a"/><rect x="137" y="122" width="16" height="6" fill="#20180a"/><rect x="155" y="122" width="6" height="6" fill="#20180a"/><rect x="163" y="122" width="14" height="6" fill="#20180a"/><rect x="193" y="122" width="10" height="12" fill="#20180a"/><rect x="177" y="128" width="14" height="6" fill="#20180a"/><rect x="137" y="140" width="16" height="6" fill="#20180a"/><rect x="161" y="140" width="16" height="6" fill="#20180a"/><rect x="221" y="80" width="8" height="6" fill="#20180a"/><rect x="245" y="80" width="14" height="6" fill="#20180a"/><rect x="261" y="80" width="10" height="6" fill="#20180a"/><rect x="221" y="92" width="8" height="12" fill="#20180a"/><rect x="231" y="92" width="14" height="12" fill="#20180a"/><rect x="205" y="98" width="16" height="6" fill="#20180a"/><rect x="247" y="98" width="12" height="6" fill="#20180a"/><rect x="261" y="98" width="10" height="6" fill="#20180a"/><rect x="205" y="110" width="16" height="6" fill="#20180a"/><rect x="245" y="110" width="14" height="6" fill="#20180a"/><rect x="205" y="122" width="16" height="6" fill="#20180a"/><rect x="223" y="122" width="6" height="6" fill="#20180a"/><rect x="231" y="122" width="14" height="6" fill="#20180a"/><rect x="261" y="122" width="10" height="12" fill="#20180a"/><rect x="245" y="128" width="14" height="6" fill="#20180a"/><rect x="205" y="140" width="16" height="6" fill="#20180a"/><rect x="229" y="140" width="16" height="6" fill="#20180a"/><rect x="289" y="80" width="8" height="6" fill="#20180a"/><rect x="313" y="80" width="14" height="6" fill="#20180a"/><rect x="329" y="80" width="10" height="6" fill="#20180a"/><rect x="289" y="92" width="8" height="12" fill="#20180a"/><rect x="299" y="92" width="14" height="12" fill="#20180a"/><rect x="273" y="98" width="16" height="6" fill="#20180a"/><rect x="315" y="98" width="12" height="6" fill="#20180a"/><rect x="329" y="98" width="10" height="6" fill="#20180a"/><rect x="273" y="110" width="16" height="6" fill="#20180a"/><rect x="313" y="110" width="14" height="6" fill="#20180a"/><rect x="273" y="122" width="16" height="6" fill="#20180a"/><rect x="291" y="122" width="6" height="6" fill="#20180a"/><rect x="299" y="122" width="14" height="6" fill="#20180a"/><rect x="329" y="122" width="10" height="12" fill="#20180a"/><rect x="313" y="128" width="14" height="6" fill="#20180a"/><rect x="273" y="140" width="16" height="6" fill="#20180a"/><rect x="297" y="140" width="16" height="6" fill="#20180a"/><rect x="357" y="80" width="8" height="6" fill="#20180a"/><rect x="381" y="80" width="14" height="6" fill="#20180a"/><rect x="397" y="80" width="10" height="6" fill="#20180a"/><rect x="357" y="92" width="8" height="12" fill="#20180a"/><rect x="367" y="92" width="14" height="12" fill="#20180a"/><rect x="341" y="98" width="16" height="6" fill="#20180a"/><rect x="383" y="98" width="12" height="6" fill="#20180a"/><rect x="397" y="98" width="10" height="6" fill="#20180a"/><rect x="341" y="110" width="16" height="6" fill="#20180a"/><rect x="381" y="110" width="14" height="6" fill="#20180a"/><rect x="341" y="122" width="16" height="6" fill="#20180a"/><rect x="359" y="122" width="6" height="6" fill="#20180a"/><rect x="367" y="122" width="14" height="6" fill="#20180a"/><rect x="397" y="122" width="10" height="12" fill="#20180a"/><rect x="381" y="128" width="14" height="6" fill="#20180a"/><rect x="341" y="140" width="16" height="6" fill="#20180a"/><rect x="365" y="140" width="16" height="6" fill="#20180a"/><rect x="425" y="80" width="8" height="6" fill="#20180a"/><rect x="449" y="80" width="14" height="6" fill="#20180a"/><rect x="465" y="80" width="10" height="6" fill="#20180a"/><rect x="425" y="92" width="8" height="12" fill="#20180a"/><rect x="435" y="92" width="14" height="12" fill="#20180a"/><rect x="409" y="98" width="16" height="6" fill="#20180a"/><rect x="451" y="98" width="12" height="6" fill="#20180a"/><rect x="465" y="98" width="10" height="6" fill="#20180a"/><rect x="409" y="110" width="16" height="6" fill="#20180a"/><rect x="449" y="110" width="14" height="6" fill="#20180a"/><rect x="409" y="122" width="16" height="6" fill="#20180a"/><rect x="427" y="122" width="6" height="6" fill="#20180a"/><rect x="435" y="122" width="14" height="6" fill="#20180a"/><rect x="465" y="122" width="10" height="12" fill="#20180a"/><rect x="449" y="128" width="14" height="6" fill="#20180a"/><rect x="409" y="140" width="16" height="6" fill="#20180a"/><rect x="433" y="140" width="16" height="6" fill="#20180a"/><rect x="493" y="80" width="8" height="6" fill="#20180a"/><rect x="517" y="80" width="14" height="6" fill="#20180a"/><rect x="533" y="80" width="10" height="6" fill="#20180a"/><rect x="493" y="92" width="8" height="12" fill="#20180a"/><rect x="503" y="92" width="14" height="12" fill="#20180a"/><rect x="477" y="98" width="16" height="6" fill="#20180a"/><rect x="519" y="98" width="12" height="6" fill="#20180a"/><rect x="533" y="98" width="10" height="6" fill="#20180a"/><rect x="477" y="110" width="16" height="6" fill="#20180a"/><rect x="517" y="110" width="14" height="6" fill="#20180a"/><rect x="477" y="122" width="16" height="6" fill="#20180a"/><rect x="495" y="122" width="6" height="6" fill="#20180a"/><rect x="503" y="122" width="14" height="6" fill="#20180a"/><rect x="533" y="122" width="10" height="12" fill="#20180a"/><rect x="517" y="128" width="14" height="6" fill="#20180a"/><rect x="477" y="140" width="16" height="6" fill="#20180a"/><rect x="501" y="140" width="16" height="6" fill="#20180a"/><rect x="561" y="80" width="8" height="6" fill="#20180a"/><rect x="585" y="80" width="14" height="6" fill="#20180a"/><rect x="601" y="80" width="10" height="6" fill="#20180a"/><rect x="561" y="92" width="8" height="12" fill="#20180a"/><rect x="571" y="92" width="14" height="12" fill="#20180a"/><rect x="545" y="98" width="16" height="6" fill="#20180a"/><rect x="587" y="98" width="12" height="6" fill="#20180a"/><rect x="601" y="98" width="10" height="6" fill="#20180a"/><rect x="545" y="110" width="16" height="6" fill="#20180a"/><rect x="585" y="110" width="14" height="6" fill="#20180a"/><rect x="545" y="122" width="16" height="6" fill="#20180a"/><rect x="563" y="122" width="6" height="6" fill="#20180a"/><rect x="571" y="122" width="14" height="6" fill="#20180a"/><rect x="601" y="122" width="10" height="12" fill="#20180a"/><rect x="585" y="128" width="14" height="6" fill="#20180a"/><rect x="545" y="140" width="16" height="6" fill="#20180a"/><rect x="569" y="140" width="16" height="6" fill="#20180a"/><rect x="629" y="80" width="8" height="6" fill="#20180a"/><rect x="629" y="92" width="8" height="12" fill="#20180a"/><rect x="639" y="92" width="8" height="12" fill="#20180a"/><rect x="613" y="98" width="16" height="6" fill="#20180a"/><rect x="613" y="110" width="16" height="6" fill="#20180a"/><rect x="613" y="122" width="16" height="6" fill="#20180a"/><rect x="631" y="122" width="6" height="6" fill="#20180a"/><rect x="639" y="122" width="8" height="6" fill="#20180a"/><rect x="613" y="140" width="16" height="6" fill="#20180a"/><rect x="637" y="140" width="10" height="6" fill="#20180a"/></svg><div class="t" style="left:347px;top:579.5px;font-size:20px;letter-spacing:1.05px;color:#2e2206;-webkit-text-stroke:0.3px #2e2206;overflow:hidden;width:130px;height:26px">E Minor</div><div class="t" style="left:483px;top:579.5px;font-size:20px;letter-spacing:1.05px;color:#2e2206;-webkit-text-stroke:0.3px #2e2206;overflow:hidden;width:64px;height:26px">E Minor</div><div class="t" style="left:551px;top:579.5px;font-size:20px;letter-spacing:1.05px;color:#2e2206;-webkit-text-stroke:0.3px #2e2206;overflow:hidden;width:64px;height:26px">E Minor</div><div class="t" style="left:619px;top:579.5px;font-size:20px;letter-spacing:1.05px;color:#2e2206;-webkit-text-stroke:0.3px #2e2206;overflow:hidden;width:130px;height:26px">E Minor</div><div class="t" style="left:891px;top:579.5px;font-size:20px;letter-spacing:1.05px;color:#2e2206;-webkit-text-stroke:0.3px #2e2206;overflow:hidden;width:130px;height:26px">E Minor</div><div style="left:138px;top:574px;width:2px;height:5px;background:#2a1e08;"></div><div style="left:138px;top:738px;width:2px;height:5px;background:#2a1e08;"></div><div style="left:410px;top:574px;width:2px;height:5px;background:#2a1e08;"></div><div style="left:410px;top:738px;width:2px;height:5px;background:#2a1e08;"></div><div style="left:682px;top:574px;width:2px;height:5px;background:#2a1e08;"></div><div style="left:682px;top:738px;width:2px;height:5px;background:#2a1e08;"></div><div style="left:954px;top:574px;width:2px;height:5px;background:#2a1e08;"></div><div style="left:954px;top:738px;width:2px;height:5px;background:#2a1e08;"></div><div style="left:70px;top:194px;width:2px;height:1088px;background:#000;"></div><div style="left:206px;top:194px;width:2px;height:1088px;background:#000;"></div><div style="left:274px;top:194px;width:2px;height:1088px;background:#000;"></div><div style="left:342px;top:194px;width:2px;height:1088px;background:#000;"></div><div style="left:478px;top:194px;width:2px;height:1088px;background:#000;"></div><div style="left:546px;top:194px;width:2px;height:1088px;background:#000;"></div><div style="left:614px;top:194px;width:2px;height:1088px;background:#000;"></div><div style="left:886px;top:194px;width:2px;height:1088px;background:#000;"></div><div style="left:750px;top:168px;width:2px;height:1114px;background:#000;"></div><div style="left:818px;top:168px;width:2px;height:1114px;background:#000;"></div><svg style="left:750px;top:167px" width="70" height="24"><rect x="1" y="1" width="68" height="22" fill="#5e5e5e" stroke="#000" stroke-width="2"/><path d="M2 2 L19 12 L2 22" fill="none" stroke="#000" stroke-width="1.6"/><path d="M68 2 L51 12 L68 22" fill="none" stroke="#000" stroke-width="1.6"/></svg><svg style="left:70px;top:193px" width="22" height="24"><path d="M1 1 L19 12 L1 23 Z" fill="#5c5c5c" stroke="#000" stroke-width="1.5"/></svg><div style="left:91px;top:194px;width:16px;height:22px;background:#4f4f4f;"></div><div class="t" style="left:-501.00px;width:1200px;text-align:center;top:195.92px;font-size:19px;color:#ececec;-webkit-text-stroke:0.5px #ececec">1</div><svg style="left:206px;top:193px" width="22" height="24"><path d="M1 1 L19 12 L1 23 Z" fill="#5c5c5c" stroke="#000" stroke-width="1.5"/></svg><div style="left:227px;top:194px;width:16px;height:22px;background:#4f4f4f;"></div><div class="t" style="left:-365.00px;width:1200px;text-align:center;top:195.92px;font-size:19px;color:#ececec;-webkit-text-stroke:0.5px #ececec">2</div><svg style="left:274px;top:193px" width="22" height="24"><path d="M1 1 L19 12 L1 23 Z" fill="#5c5c5c" stroke="#000" stroke-width="1.5"/></svg><div style="left:295px;top:194px;width:16px;height:22px;background:#4f4f4f;"></div><div class="t" style="left:-297.00px;width:1200px;text-align:center;top:195.92px;font-size:19px;color:#ececec;-webkit-text-stroke:0.5px #ececec">3</div><svg style="left:342px;top:193px" width="22" height="24"><path d="M1 1 L19 12 L1 23 Z" fill="#5c5c5c" stroke="#000" stroke-width="1.5"/></svg><div style="left:363px;top:194px;width:16px;height:22px;background:#4f4f4f;"></div><div class="t" style="left:-229.00px;width:1200px;text-align:center;top:195.92px;font-size:19px;color:#ececec;-webkit-text-stroke:0.5px #ececec">4</div><svg style="left:478px;top:193px" width="22" height="24"><path d="M1 1 L19 12 L1 23 Z" fill="#5c5c5c" stroke="#000" stroke-width="1.5"/></svg><div style="left:499px;top:194px;width:16px;height:22px;background:#4f4f4f;"></div><div class="t" style="left:-93.00px;width:1200px;text-align:center;top:195.92px;font-size:19px;color:#ececec;-webkit-text-stroke:0.5px #ececec">5</div><svg style="left:546px;top:193px" width="22" height="24"><path d="M1 1 L19 12 L1 23 Z" fill="#5c5c5c" stroke="#000" stroke-width="1.5"/></svg><div style="left:567px;top:194px;width:16px;height:22px;background:#4f4f4f;"></div><div class="t" style="left:-25.00px;width:1200px;text-align:center;top:195.92px;font-size:19px;color:#ececec;-webkit-text-stroke:0.5px #ececec">6</div><svg style="left:614px;top:193px" width="22" height="24"><path d="M1 1 L19 12 L1 23 Z" fill="#5c5c5c" stroke="#000" stroke-width="1.5"/></svg><div style="left:635px;top:194px;width:16px;height:22px;background:#4f4f4f;"></div><div class="t" style="left:43.00px;width:1200px;text-align:center;top:195.92px;font-size:19px;color:#ececec;-webkit-text-stroke:0.5px #ececec">7</div><svg style="left:886px;top:193px" width="22" height="24"><path d="M1 1 L19 12 L1 23 Z" fill="#5c5c5c" stroke="#000" stroke-width="1.5"/></svg><div style="left:907px;top:194px;width:16px;height:22px;background:#4f4f4f;"></div><div class="t" style="left:315.00px;width:1200px;text-align:center;top:195.92px;font-size:19px;color:#ececec;-webkit-text-stroke:0.5px #ececec">8</div><div style="left:71.0px;top:1283px;width:2px;height:14.5px;background:#8e8e8e;"></div><div style="left:71.0px;top:1295.5px;width:4px;height:2px;background:#8e8e8e;"></div><div class="t" style="left:76.50px;top:1286.67px;font-size:20px;color:#d6d6d6;-webkit-text-stroke:0.35px #d6d6d6">0:00</div><div style="left:332.4px;top:1283px;width:2px;height:14.5px;background:#8e8e8e;"></div><div style="left:332.4px;top:1295.5px;width:4px;height:2px;background:#8e8e8e;"></div><div class="t" style="left:337.90px;top:1286.67px;font-size:20px;color:#d6d6d6;-webkit-text-stroke:0.35px #d6d6d6">1:00</div><div style="left:593.8px;top:1283px;width:2px;height:14.5px;background:#8e8e8e;"></div><div style="left:593.8px;top:1295.5px;width:4px;height:2px;background:#8e8e8e;"></div><div class="t" style="left:599.30px;top:1286.67px;font-size:20px;color:#d6d6d6;-webkit-text-stroke:0.35px #d6d6d6">2:00</div><div style="left:855.1999999999999px;top:1283px;width:2px;height:14.5px;background:#8e8e8e;"></div><div style="left:855.1999999999999px;top:1295.5px;width:4px;height:2px;background:#8e8e8e;"></div><div class="t" style="left:860.70px;top:1286.67px;font-size:20px;color:#d6d6d6;-webkit-text-stroke:0.35px #d6d6d6">3:00</div><div style="left:114.56666666666666px;top:1282px;width:2px;height:5px;background:#8a8a8a;"></div><div style="left:158.13333333333333px;top:1282px;width:2px;height:5px;background:#8a8a8a;"></div><div style="left:201.7px;top:1282px;width:2px;height:5px;background:#8a8a8a;"></div><div style="left:245.26666666666665px;top:1282px;width:2px;height:5px;background:#8a8a8a;"></div><div style="left:288.83333333333337px;top:1282px;width:2px;height:5px;background:#8a8a8a;"></div><div style="left:375.96666666666664px;top:1282px;width:2px;height:5px;background:#8a8a8a;"></div><div style="left:419.5333333333333px;top:1282px;width:2px;height:5px;background:#8a8a8a;"></div><div style="left:463.09999999999997px;top:1282px;width:2px;height:5px;background:#8a8a8a;"></div><div style="left:506.6666666666667px;top:1282px;width:2px;height:5px;background:#8a8a8a;"></div><div style="left:550.2333333333333px;top:1282px;width:2px;height:5px;background:#8a8a8a;"></div><div style="left:637.3666666666667px;top:1282px;width:2px;height:5px;background:#8a8a8a;"></div><div style="left:680.9333333333333px;top:1282px;width:2px;height:5px;background:#8a8a8a;"></div><div style="left:724.4999999999999px;top:1282px;width:2px;height:5px;background:#8a8a8a;"></div><div style="left:768.0666666666666px;top:1282px;width:2px;height:5px;background:#8a8a8a;"></div><div style="left:811.6333333333332px;top:1282px;width:2px;height:5px;background:#8a8a8a;"></div><div style="left:898.7666666666665px;top:1282px;width:2px;height:5px;background:#8a8a8a;"></div><div style="left:942.3333333333334px;top:1282px;width:2px;height:5px;background:#8a8a8a;"></div><div style="left:985.9px;top:1282px;width:2px;height:5px;background:#8a8a8a;"></div><div style="left:2700px;top:18px;width:81px;height:34px;background:#262626;"></div><div style="left:2784px;top:18px;width:60px;height:34px;background:#222;"></div><div style="left:2848px;top:18px;width:16px;height:16px;background:#222;"></div><div style="left:2848px;top:36px;width:16px;height:16px;background:#222;"></div><div style="left:2770px;top:80px;width:36px;height:26px;background:#3a3a3a;border:2px solid #161616;box-sizing:border-box"></div><div class="t" style="left:2188.00px;width:1200px;text-align:center;top:84.42px;font-size:19px;color:#f0f0f0;-webkit-text-stroke:0.4px #f0f0f0">W</div><div style="left:2826px;top:70px;width:38px;height:38px;border-radius:50%;background:#262626"></div><div style="left:2834px;top:79px;width:22px;height:4.3px;background:#f39a1e;"></div><div style="left:2834px;top:87px;width:22px;height:4.3px;background:#f39a1e;"></div><div style="left:2834px;top:95px;width:22px;height:4.3px;background:#f39a1e;"></div><div style="left:2826px;top:116px;width:38px;height:38px;border-radius:50%;background:#262626"></div><div style="left:2836px;top:125px;width:4px;height:20px;background:#5a5a5a;"></div><div style="left:2843px;top:125px;width:4px;height:20px;background:#5a5a5a;"></div><div style="left:2850px;top:125px;width:4px;height:20px;background:#5a5a5a;"></div><div style="left:2771px;top:230px;width:39px;height:34px;background:#4a4a4a;"></div><div style="left:2771px;top:233.5px;width:7px;height:27px;border:1.3px solid #151515;box-sizing:border-box"></div><div style="left:2790px;top:231px;width:6px;height:31px;background:#1a1a1a;"></div><div style="left:2798px;top:231px;width:6px;height:31px;background:#1a1a1a;"></div><div style="left:2789px;top:234px;width:16px;height:1.2px;background:#4a4a4a;"></div><div style="left:2771px;top:268px;width:39px;height:34px;background:#4a4a4a;"></div><div style="left:2771px;top:271.5px;width:7px;height:27px;border:1.3px solid #151515;box-sizing:border-box"></div><div style="left:2790px;top:269px;width:6px;height:31px;background:#1a1a1a;"></div><div style="left:2798px;top:269px;width:6px;height:31px;background:#1a1a1a;"></div><div style="left:2789px;top:272px;width:16px;height:1.2px;background:#4a4a4a;"></div><div style="left:2771px;top:306px;width:39px;height:34px;background:#4a4a4a;"></div><div style="left:2771px;top:309.5px;width:7px;height:27px;border:1.3px solid #151515;box-sizing:border-box"></div><div style="left:2790px;top:307px;width:6px;height:31px;background:#1a1a1a;"></div><div style="left:2798px;top:307px;width:6px;height:31px;background:#1a1a1a;"></div><div style="left:2789px;top:310px;width:16px;height:1.2px;background:#4a4a4a;"></div><div style="left:2771px;top:344px;width:39px;height:34px;background:#4a4a4a;"></div><div style="left:2771px;top:347.5px;width:7px;height:27px;border:1.3px solid #151515;box-sizing:border-box"></div><div style="left:2790px;top:345px;width:6px;height:31px;background:#1a1a1a;"></div><div style="left:2798px;top:345px;width:6px;height:31px;background:#1a1a1a;"></div><div style="left:2789px;top:348px;width:16px;height:1.2px;background:#4a4a4a;"></div><div style="left:2771px;top:382px;width:39px;height:34px;background:#4a4a4a;"></div><div style="left:2771px;top:385.5px;width:7px;height:27px;border:1.3px solid #151515;box-sizing:border-box"></div><div style="left:2790px;top:383px;width:6px;height:31px;background:#1a1a1a;"></div><div style="left:2798px;top:383px;width:6px;height:31px;background:#1a1a1a;"></div><div style="left:2789px;top:386px;width:16px;height:1.2px;background:#4a4a4a;"></div><div style="left:2771px;top:420px;width:39px;height:34px;background:#4a4a4a;"></div><div style="left:2771px;top:423.5px;width:7px;height:27px;border:1.3px solid #151515;box-sizing:border-box"></div><div style="left:2790px;top:421px;width:6px;height:31px;background:#1a1a1a;"></div><div style="left:2798px;top:421px;width:6px;height:31px;background:#1a1a1a;"></div><div style="left:2789px;top:424px;width:16px;height:1.2px;background:#4a4a4a;"></div><div style="left:2771px;top:458px;width:39px;height:34px;background:#4a4a4a;"></div><div style="left:2771px;top:461.5px;width:7px;height:27px;border:1.3px solid #151515;box-sizing:border-box"></div><div style="left:2790px;top:459px;width:6px;height:31px;background:#1a1a1a;"></div><div style="left:2798px;top:459px;width:6px;height:31px;background:#1a1a1a;"></div><div style="left:2789px;top:462px;width:16px;height:1.2px;background:#4a4a4a;"></div><div style="left:2771px;top:496px;width:39px;height:34px;background:#4a4a4a;"></div><div style="left:2771px;top:499.5px;width:7px;height:27px;border:1.3px solid #151515;box-sizing:border-box"></div><div style="left:2790px;top:497px;width:6px;height:31px;background:#1a1a1a;"></div><div style="left:2798px;top:497px;width:6px;height:31px;background:#1a1a1a;"></div><div style="left:2789px;top:500px;width:16px;height:1.2px;background:#4a4a4a;"></div><div style="left:2771px;top:534px;width:39px;height:34px;background:#4a4a4a;"></div><div style="left:2771px;top:537.5px;width:7px;height:27px;border:1.3px solid #151515;box-sizing:border-box"></div><div style="left:2790px;top:535px;width:6px;height:31px;background:#1a1a1a;"></div><div style="left:2798px;top:535px;width:6px;height:31px;background:#1a1a1a;"></div><div style="left:2789px;top:538px;width:16px;height:1.2px;background:#4a4a4a;"></div><div style="left:2771px;top:572px;width:39px;height:172px;background:#4a4a4a;"></div><div style="left:2771px;top:575.5px;width:7px;height:27px;border:1.3px solid #151515;box-sizing:border-box"></div><div style="left:2790px;top:573px;width:6px;height:170px;background:#1a1a1a;"></div><div style="left:2798px;top:573px;width:6px;height:170px;background:#1a1a1a;"></div><div style="left:2789px;top:576px;width:16px;height:1.2px;background:#4a4a4a;"></div><div style="left:2771px;top:748px;width:39px;height:418px;background:#4e4e4e;"></div><div style="left:2771px;top:1172px;width:39px;height:34px;background:#4a4a4a;"></div><div style="left:2770px;top:1176px;width:8px;height:26px;background:#f09a23;border:1.5px solid #151515;box-sizing:border-box"></div><div style="left:2790px;top:1173px;width:6px;height:31px;background:#1a1a1a;"></div><div style="left:2798px;top:1173px;width:6px;height:31px;background:#1a1a1a;"></div><div style="left:2789px;top:1176px;width:16px;height:1.2px;background:#4a4a4a;"></div><div style="left:2771px;top:1210px;width:39px;height:34px;background:#4a4a4a;"></div><div style="left:2770px;top:1214px;width:8px;height:26px;background:#f09a23;border:1.5px solid #151515;box-sizing:border-box"></div><div style="left:2790px;top:1211px;width:6px;height:31px;background:#1a1a1a;"></div><div style="left:2798px;top:1211px;width:6px;height:31px;background:#1a1a1a;"></div><div style="left:2789px;top:1214px;width:16px;height:1.2px;background:#4a4a4a;"></div><div style="left:2771px;top:1248px;width:39px;height:34px;background:#4a4a4a;"></div><div style="left:2770px;top:1252px;width:8px;height:26px;background:#3a3a3a;border:1.5px solid #151515;box-sizing:border-box"></div><div style="left:2790px;top:1249px;width:6px;height:31px;background:#1a1a1a;"></div><div style="left:2798px;top:1249px;width:6px;height:31px;background:#1a1a1a;"></div><div style="left:2789px;top:1252px;width:16px;height:1.2px;background:#4a4a4a;"></div><div style="left:2824px;top:1124px;width:26px;height:26px;border-radius:50%;background:#f09a23"></div><div class="t" style="left:2237.00px;width:1200px;text-align:center;top:1130.65px;font-size:14px;color:#222;-webkit-text-stroke:0.4px #222">I·O</div><div style="left:2824px;top:1162px;width:26px;height:26px;border-radius:50%;background:#f09a23"></div><div class="t" style="left:2237.00px;width:1200px;text-align:center;top:1167.80px;font-size:15px;color:#222;-webkit-text-stroke:0.4px #222">R</div><div style="left:2824px;top:1200px;width:26px;height:26px;border-radius:50%;background:#f09a23"></div><div class="t" style="left:2237.00px;width:1200px;text-align:center;top:1205.80px;font-size:15px;color:#222;-webkit-text-stroke:0.4px #222">M</div><div style="left:2824px;top:1238px;width:26px;height:26px;border-radius:50%;background:#8e8e8e"></div><div class="t" style="left:2237.00px;width:1200px;text-align:center;top:1243.80px;font-size:15px;color:#222;-webkit-text-stroke:0.4px #222">D</div><div style="left:16px;top:1332px;width:2848px;height:392px;background:#2d2d2d;border-radius:10px"></div><div style="left:916px;top:1340px;width:1940px;height:375px;background:#505050;"></div><div style="left:900px;top:1488px;width:4px;height:80px;background:#1c1c1c;"></div><div style="left:906px;top:1488px;width:4px;height:80px;background:#1c1c1c;"></div><div style="left:899px;top:1494px;width:12px;height:2px;background:#2d2d2d;"></div><div style="left:16px;top:1742px;width:38px;height:38px;border-radius:50%;background:#2e2e2e"></div><svg style="left:25px;top:1749px" width="24" height="24"><path d="M3 2 L21 12 L3 22 Z" fill="#5a5a5a" stroke="#5a5a5a" stroke-width="2.5" stroke-linejoin="round"/></svg><div style="left:70px;top:1740px;width:2129px;height:44px;background:#2e2e2e;border-radius:8px"></div><div style="left:76px;top:1746px;width:2118px;height:32px;background:#505050;"></div><div style="left:2216px;top:1740px;width:412px;height:44px;background:#2e2e2e;border-radius:8px"></div><div style="left:2222px;top:1746px;width:400px;height:32px;background:#505050;"></div><div style="left:2644px;top:1724px;width:166px;height:60px;background:#2e2e2e;border-radius:0 0 8px 8px"></div><div class="t" style="left:2652.50px;top:1753.37px;font-size:20px;color:#ececec;font-weight:bold;letter-spacing:0.6px">Master</div><div style="left:2730px;top:1742px;width:74px;height:39px;border:3px solid #a8a8a8;box-sizing:border-box;background:#474747"></div><div style="left:2735px;top:1747px;width:64px;height:2px;background:#6fd0e0;"></div><div class="t" style="left:2165.00px;width:1200px;text-align:center;top:1756.92px;font-size:19px;color:#f0f0f0;">Kontrol</div><div style="left:2826px;top:1742px;width:38px;height:38px;border-radius:50%;background:#2e2e2e"></div><svg style="left:2833px;top:1749px" width="24" height="24"><path d="M12 3 L21 20 L3 20 Z" fill="#5a5a5a" stroke="#5a5a5a" stroke-width="2.5" stroke-linejoin="round"/></svg><div style="left:28px;top:1340px;width:866px;height:375px;background:#050505;border-radius:8px"></div><div style="left:28px;top:1340px;width:866px;height:34px;background:#6b8e9a;border-radius:8px 8px 0 0"></div><div style="left:34px;top:1343.6px;width:21.6px;height:21.6px;border-radius:50%;background:#f39a25;border:2px solid #1a1a1a;box-sizing:content-box"></div><div class="t" style="left:69.00px;top:1346.87px;font-size:20px;color:#1d2a31;-webkit-text-stroke:0.5px #1d2a31;letter-spacing:1.4px">Kontrol</div><svg style="left:148px;top:1345px" width="22" height="24" viewBox="0 0 22 24"><g stroke="#4a3cf6" stroke-width="3.3" stroke-linecap="round" fill="none"><path d="M5.6 3 L7.6 12"/><path d="M10.2 1.8 L10.6 11"/><path d="M14.7 3 L13.8 11"/><path d="M18.6 7 L16.4 13"/><path d="M2 10.4 L6.5 14.5"/></g><path d="M5.5 10 L17.8 10.5 L16.5 17 Q15 21.8 11 21.8 Q8 21.8 6.5 18.5 L4.5 13.5 Z" fill="#4a3cf6"/></svg><svg style="left:790px;top:1340px" width="100" height="34"><g transform="translate(-790,-1340)"><circle cx="810.9" cy="1356.8" r="11.6" fill="#3b3b3b" stroke="#0e0e0e" stroke-width="2.3"/><circle cx="842.95" cy="1356.8" r="11.6" fill="#3b3b3b" stroke="#0e0e0e" stroke-width="2.3"/><circle cx="874.8" cy="1356.8" r="11.6" fill="#3b3b3b" stroke="#0e0e0e" stroke-width="2.3"/><rect x="805.1" y="1353.3" width="11.9" height="7.5" fill="none" stroke="#f2f2f2" stroke-width="2"/><rect x="806.1" y="1350" width="1.9" height="2.5" fill="#f2f2f2"/><rect x="814.2" y="1350" width="1.9" height="2.5" fill="#f2f2f2"/><rect x="806.1" y="1361.6" width="1.9" height="2.4" fill="#f2f2f2"/><rect x="814.2" y="1361.6" width="1.9" height="2.4" fill="#f2f2f2"/><path d="M843.8 1351.8 A6.3 6.3 0 0 0 837.6 1357.5" fill="none" stroke="#f2f2f2" stroke-width="2"/><path d="M834.6 1356.2 L839.8 1355.8 L837 1360 Z" fill="#f2f2f2"/><path d="M842.3 1362.2 A6.3 6.3 0 0 0 848.5 1356.8" fill="none" stroke="#f2f2f2" stroke-width="2"/><path d="M846 1358 L851.9 1357.5 L849.2 1353.8 Z" fill="#f2f2f2"/><path d="M868 1350 L879 1350 L882 1353 L882 1364 L868 1364 Z" fill="#e6e6e6"/><rect x="872.3" y="1352.3" width="5.7" height="3.4" fill="#3b3b3b"/></g></svg><div style="left:42px;top:1398px;width:83px;height:36px;border:2px solid #f2f2f2;border-radius:19px;background:#111;box-sizing:border-box"></div><div class="t" style="left:-516.00px;width:1200px;text-align:center;top:1408.26px;font-size:18px;color:#f4f4f4;font-weight:bold;transform:scaleX(0.92);letter-spacing:-0.3px">DISPLAY</div><svg style="left:197.0px;top:1380.0px" width="60" height="60"><path d="M14.07 47.69 A23.8 23.8 0 1 1 41.90 50.61" stroke="#3e4172" stroke-width="3.6" fill="none"/><path d="M30 30 L17.35 51.91" stroke="#e9e6d6" stroke-width="3.5" stroke-linecap="round"/></svg><div class="t" style="left:-373.00px;width:1200px;text-align:center;top:1436.36px;font-size:18px;color:#e0e0e0;-webkit-text-stroke:0.45px #e0e0e0">0</div><svg style="left:383.0px;top:1380.0px" width="60" height="60"><path d="M40.94 8.86 A23.8 23.8 0 0 1 41.90 50.61" stroke="#3e4172" stroke-width="3.6" fill="none"/><path d="M18.10 50.61 A23.8 23.8 0 0 1 36.30 7.05" stroke="#f7f7f7" stroke-width="3.6" fill="none"/><path d="M30 30 L36.70 5.60" stroke="#e9e6d6" stroke-width="3.5" stroke-linecap="round"/></svg><div class="t" style="left:-187.00px;width:1200px;text-align:center;top:1436.36px;font-size:18px;color:#e0e0e0;-webkit-text-stroke:0.45px #e0e0e0">70</div><svg style="left:567.0px;top:1379.0px" width="60" height="60"><path d="M25.69 6.59 A23.8 23.8 0 0 1 41.90 50.61" stroke="#3e4172" stroke-width="3.6" fill="none"/><path d="M18.10 50.61 A23.8 23.8 0 0 1 20.91 8.00" stroke="#f7f7f7" stroke-width="3.6" fill="none"/><path d="M30 30 L20.34 6.62" stroke="#e9e6d6" stroke-width="3.5" stroke-linecap="round"/></svg><div class="t" style="left:-3.00px;width:1200px;text-align:center;top:1436.36px;font-size:18px;color:#e0e0e0;-webkit-text-stroke:0.45px #e0e0e0">54</div><svg style="left:751.0px;top:1379.0px" width="60" height="60"><path d="M6.47 26.40 A23.8 23.8 0 1 1 41.90 50.61" stroke="#3e4172" stroke-width="3.6" fill="none"/><path d="M18.10 50.61 A23.8 23.8 0 0 1 6.24 31.37" stroke="#f7f7f7" stroke-width="3.6" fill="none"/><path d="M30 30 L4.74 31.46" stroke="#e9e6d6" stroke-width="3.5" stroke-linecap="round"/></svg><div class="t" style="left:181.00px;width:1200px;text-align:center;top:1436.36px;font-size:18px;color:#e0e0e0;-webkit-text-stroke:0.45px #e0e0e0">24</div><div style="left:59px;top:1465.5px;width:50px;height:56px;border:2px solid #f2f2f2;box-sizing:border-box;background:#121212"></div><div style="left:61px;top:1470.5px;width:46px;height:46px;border-radius:50%;border:2px solid #1c1c1c;box-sizing:border-box"></div><div class="t" style="left:-516.00px;width:1200px;text-align:center;top:1483.17px;font-size:20px;color:#f2f2f2;-webkit-text-stroke:0.6px #f2f2f2">1</div><div style="left:59px;top:1527.5px;width:50px;height:56px;border:2px solid #f2f2f2;box-sizing:border-box;background:#ffffff"></div><div style="left:61px;top:1532.5px;width:46px;height:46px;border-radius:50%;border:2px solid #c9c9c9;box-sizing:border-box"></div><div class="t" style="left:-516.00px;width:1200px;text-align:center;top:1545.17px;font-size:20px;color:#000;-webkit-text-stroke:0.6px #000">2</div><div style="left:59px;top:1590.3px;width:50px;height:56px;border:2px solid #f2f2f2;box-sizing:border-box;background:#121212"></div><div style="left:61px;top:1595.3px;width:46px;height:46px;border-radius:50%;border:2px solid #1c1c1c;box-sizing:border-box"></div><div class="t" style="left:-516.00px;width:1200px;text-align:center;top:1607.97px;font-size:20px;color:#f2f2f2;-webkit-text-stroke:0.6px #f2f2f2">3</div><div style="left:59px;top:1652.6px;width:50px;height:56px;border:2px solid #f2f2f2;box-sizing:border-box;background:#121212"></div><div style="left:61px;top:1657.6px;width:46px;height:46px;border-radius:50%;border:2px solid #1c1c1c;box-sizing:border-box"></div><div class="t" style="left:-516.00px;width:1200px;text-align:center;top:1670.27px;font-size:20px;color:#f2f2f2;-webkit-text-stroke:0.6px #f2f2f2">4</div><div style="left:136.3px;top:1462.3px;width:27px;height:27px;border-radius:50%;border:2px solid #ff00f5;box-sizing:border-box"></div><div class="t" style="left:-450.20px;width:1200px;text-align:center;top:1467.36px;font-size:18px;color:#ff00f5;font-weight:bold;transform:scaleX(0.85)">X</div><div class="t" style="left:168.00px;top:1466.14px;font-size:18.5px;color:#ff00f5;-webkit-text-stroke:0.6px #ff00f5;letter-spacing:0.35px">Filter Freq</div><div class="t" style="left:-422.60px;width:1200px;text-align:center;top:1494.52px;font-size:19px;color:#ff00f5;-webkit-text-stroke:0.6px #ff00f5">0</div><div style="left:230.0px;top:1494.2px;width:80px;height:21.4px;background:#4a0f45;"></div><div class="t" style="left:-330.00px;width:1200px;text-align:center;top:1494.52px;font-size:19px;color:#ff00f5;-webkit-text-stroke:0.6px #ff00f5">127</div><div style="left:322.3px;top:1462.3px;width:27px;height:27px;border-radius:50%;border:2px solid #ff00f5;box-sizing:border-box"></div><div class="t" style="left:-264.20px;width:1200px;text-align:center;top:1467.36px;font-size:18px;color:#ff00f5;font-weight:bold;transform:scaleX(0.85)">X</div><div class="t" style="left:354.00px;top:1466.14px;font-size:18.5px;color:#ff00f5;-webkit-text-stroke:0.6px #ff00f5;letter-spacing:0.35px">Detune/5th</div><div class="t" style="left:-236.60px;width:1200px;text-align:center;top:1494.52px;font-size:19px;color:#ff00f5;-webkit-text-stroke:0.6px #ff00f5">0</div><div style="left:416.0px;top:1494.2px;width:80px;height:21.4px;background:#4a0f45;"></div><div class="t" style="left:-144.00px;width:1200px;text-align:center;top:1494.52px;font-size:19px;color:#ff00f5;-webkit-text-stroke:0.6px #ff00f5">127</div><div style="left:506.3px;top:1462.3px;width:27px;height:27px;border-radius:50%;border:2px solid #ff00f5;box-sizing:border-box"></div><div class="t" style="left:-80.20px;width:1200px;text-align:center;top:1467.36px;font-size:18px;color:#ff00f5;font-weight:bold;transform:scaleX(0.85)">X</div><div class="t" style="left:538.00px;top:1466.14px;font-size:18.5px;color:#ff00f5;-webkit-text-stroke:0.6px #ff00f5;letter-spacing:0.35px">LFO</div><div class="t" style="left:-52.60px;width:1200px;text-align:center;top:1494.52px;font-size:19px;color:#ff00f5;-webkit-text-stroke:0.6px #ff00f5">0</div><div style="left:600.0px;top:1494.2px;width:80px;height:21.4px;background:#4a0f45;"></div><div class="t" style="left:40.00px;width:1200px;text-align:center;top:1494.52px;font-size:19px;color:#ff00f5;-webkit-text-stroke:0.6px #ff00f5">127</div><div style="left:690.2px;top:1462.3px;width:27px;height:27px;border-radius:50%;border:2px solid #ff00f5;box-sizing:border-box"></div><div class="t" style="left:103.70px;width:1200px;text-align:center;top:1467.36px;font-size:18px;color:#ff00f5;font-weight:bold;transform:scaleX(0.85)">X</div><div class="t" style="left:721.90px;top:1466.14px;font-size:18.5px;color:#ff00f5;-webkit-text-stroke:0.6px #ff00f5;letter-spacing:0.35px">Filter Env</div><div class="t" style="left:131.30px;width:1200px;text-align:center;top:1494.52px;font-size:19px;color:#ff00f5;-webkit-text-stroke:0.6px #ff00f5">0</div><div style="left:783.9px;top:1494.2px;width:80px;height:21.4px;background:#4a0f45;"></div><div class="t" style="left:223.90px;width:1200px;text-align:center;top:1494.52px;font-size:19px;color:#ff00f5;-webkit-text-stroke:0.6px #ff00f5">127</div><div style="left:136.3px;top:1526.4px;width:27px;height:27px;border-radius:50%;border:2px solid #ff0808;box-sizing:border-box"></div><div class="t" style="left:-450.20px;width:1200px;text-align:center;top:1531.46px;font-size:18px;color:#ff0808;font-weight:bold;transform:scaleX(0.85)">X</div><div class="t" style="left:168.00px;top:1530.24px;font-size:18.5px;color:#ff0808;-webkit-text-stroke:0.6px #ff0808;letter-spacing:0.35px">F2 Freq</div><div class="t" style="left:-422.60px;width:1200px;text-align:center;top:1558.62px;font-size:19px;color:#ff0808;-webkit-text-stroke:0.6px #ff0808">0</div><div style="left:230.0px;top:1558.3px;width:80px;height:21.4px;background:#480e0e;"></div><div class="t" style="left:-330.00px;width:1200px;text-align:center;top:1558.62px;font-size:19px;color:#ff0808;-webkit-text-stroke:0.6px #ff0808">127</div><div style="left:322.3px;top:1526.4px;width:27px;height:27px;border-radius:50%;border:2px solid #ff0808;box-sizing:border-box"></div><div class="t" style="left:-264.20px;width:1200px;text-align:center;top:1531.46px;font-size:18px;color:#ff0808;font-weight:bold;transform:scaleX(0.85)">X</div><div class="t" style="left:354.00px;top:1530.24px;font-size:18.5px;color:#ff0808;-webkit-text-stroke:0.6px #ff0808;letter-spacing:0.35px">F2 Resonance</div><div class="t" style="left:-236.60px;width:1200px;text-align:center;top:1558.62px;font-size:19px;color:#ff0808;-webkit-text-stroke:0.6px #ff0808">0</div><div style="left:416.0px;top:1558.3px;width:80px;height:21.4px;background:#480e0e;"></div><div class="t" style="left:-144.00px;width:1200px;text-align:center;top:1558.62px;font-size:19px;color:#ff0808;-webkit-text-stroke:0.6px #ff0808">127</div><div style="left:506.3px;top:1526.4px;width:27px;height:27px;border-radius:50%;border:2px solid #ff0808;box-sizing:border-box"></div><div class="t" style="left:-80.20px;width:1200px;text-align:center;top:1531.46px;font-size:18px;color:#ff0808;font-weight:bold;transform:scaleX(0.85)">X</div><div class="t" style="left:538.00px;top:1530.24px;font-size:18.5px;color:#ff0808;-webkit-text-stroke:0.6px #ff0808;letter-spacing:0.35px">Detune</div><div class="t" style="left:-52.60px;width:1200px;text-align:center;top:1558.62px;font-size:19px;color:#ff0808;-webkit-text-stroke:0.6px #ff0808">0</div><div style="left:600.0px;top:1558.3px;width:80px;height:21.4px;background:#480e0e;"></div><div class="t" style="left:40.00px;width:1200px;text-align:center;top:1558.62px;font-size:19px;color:#ff0808;-webkit-text-stroke:0.6px #ff0808">127</div><div style="left:690.2px;top:1526.4px;width:27px;height:27px;border-radius:50%;border:2px solid #22eef0;box-sizing:border-box"></div><div class="t" style="left:103.70px;width:1200px;text-align:center;top:1531.46px;font-size:18px;color:#22eef0;font-weight:bold;transform:scaleX(0.85)">X</div><div class="t" style="left:721.90px;top:1530.24px;font-size:18.5px;color:#22eef0;-webkit-text-stroke:0.6px #22eef0;letter-spacing:0.35px">5th</div><div class="t" style="left:131.30px;width:1200px;text-align:center;top:1558.62px;font-size:19px;color:#22eef0;-webkit-text-stroke:0.6px #22eef0">0</div><div style="left:783.9px;top:1558.3px;width:80px;height:21.4px;background:#17484a;"></div><div class="t" style="left:223.90px;width:1200px;text-align:center;top:1558.62px;font-size:19px;color:#22eef0;-webkit-text-stroke:0.6px #22eef0">127</div><div style="left:136.3px;top:1588.3px;width:27px;height:27px;border-radius:50%;border:2px solid #22f01e;box-sizing:border-box"></div><div class="t" style="left:-450.20px;width:1200px;text-align:center;top:1593.36px;font-size:18px;color:#22f01e;font-weight:bold;transform:scaleX(0.85)">X</div><div class="t" style="left:168.00px;top:1592.14px;font-size:18.5px;color:#22f01e;-webkit-text-stroke:0.6px #22f01e;letter-spacing:0.35px">Tone</div><div class="t" style="left:-422.60px;width:1200px;text-align:center;top:1620.52px;font-size:19px;color:#22f01e;-webkit-text-stroke:0.6px #22f01e">0</div><div style="left:230.0px;top:1620.2px;width:80px;height:21.4px;background:#17441a;"></div><div class="t" style="left:-330.00px;width:1200px;text-align:center;top:1620.52px;font-size:19px;color:#22f01e;-webkit-text-stroke:0.6px #22f01e">127</div><div style="left:322.3px;top:1588.3px;width:27px;height:27px;border-radius:50%;border:2px solid #22f01e;box-sizing:border-box"></div><div class="t" style="left:-264.20px;width:1200px;text-align:center;top:1593.36px;font-size:18px;color:#22f01e;font-weight:bold;transform:scaleX(0.85)">X</div><div class="t" style="left:354.00px;top:1592.14px;font-size:18.5px;color:#22f01e;-webkit-text-stroke:0.6px #22f01e;letter-spacing:0.35px">Drive</div><div class="t" style="left:-236.60px;width:1200px;text-align:center;top:1620.52px;font-size:19px;color:#22f01e;-webkit-text-stroke:0.6px #22f01e">0</div><div style="left:416.0px;top:1620.2px;width:80px;height:21.4px;background:#17441a;"></div><div class="t" style="left:-144.00px;width:1200px;text-align:center;top:1620.52px;font-size:19px;color:#22f01e;-webkit-text-stroke:0.6px #22f01e">127</div><div style="left:506.3px;top:1588.3px;width:27px;height:27px;border-radius:50%;border:2px solid #22f01e;box-sizing:border-box"></div><div class="t" style="left:-80.20px;width:1200px;text-align:center;top:1593.36px;font-size:18px;color:#22f01e;font-weight:bold;transform:scaleX(0.85)">X</div><div class="t" style="left:538.00px;top:1592.14px;font-size:18.5px;color:#22f01e;-webkit-text-stroke:0.6px #22f01e;letter-spacing:0.35px">Detune</div><div class="t" style="left:-52.60px;width:1200px;text-align:center;top:1620.52px;font-size:19px;color:#22f01e;-webkit-text-stroke:0.6px #22f01e">0</div><div style="left:600.0px;top:1620.2px;width:80px;height:21.4px;background:#17441a;"></div><div class="t" style="left:40.00px;width:1200px;text-align:center;top:1620.52px;font-size:19px;color:#22f01e;-webkit-text-stroke:0.6px #22f01e">127</div><div style="left:692.3px;top:1590.3px;width:175.5px;height:55.2px;border:2.5px solid #22eef0;box-sizing:border-box;background:#000"></div><div class="t" style="left:180.00px;width:1200px;text-align:center;top:1607.42px;font-size:19px;color:#22eef0;font-weight:bold">MAP</div><div style="left:138.3px;top:1652.5px;width:175.5px;height:54.8px;border:2.5px solid #f5ef00;box-sizing:border-box;background:#000"></div><div class="t" style="left:-374.00px;width:1200px;text-align:center;top:1669.42px;font-size:19px;color:#f5ef00;font-weight:bold">MAP</div><div style="left:323.2px;top:1652.5px;width:175.5px;height:54.8px;border:2.5px solid #f5ef00;box-sizing:border-box;background:#000"></div><div class="t" style="left:-189.10px;width:1200px;text-align:center;top:1669.42px;font-size:19px;color:#f5ef00;font-weight:bold">MAP</div><div style="left:508px;top:1652.5px;width:175.5px;height:54.8px;border:2.5px solid #f5ef00;box-sizing:border-box;background:#000"></div><div class="t" style="left:-4.30px;width:1200px;text-align:center;top:1669.42px;font-size:19px;color:#f5ef00;font-weight:bold">MAP</div><div style="left:692.3px;top:1652.5px;width:175.5px;height:54.8px;border:2.5px solid #f5ef00;box-sizing:border-box;background:#000"></div><div class="t" style="left:180.00px;width:1200px;text-align:center;top:1669.42px;font-size:19px;color:#f5ef00;font-weight:bold">MAP</div><div style="left:978px;top:18px;width:1794px;height:1556.5px;background:#000;border-radius:16px 16px 12px 12px;box-shadow:0 14px 34px rgba(0,0,0,0.3), 0 0 0 1px rgba(0,0,0,0.2)"></div><div style="left:978px;top:18px;width:1794px;height:38px;background:#efefef;border-radius:16px 16px 0 0;border-bottom:1px solid #f8f8f8;box-sizing:border-box"></div><div style="left:988px;top:27.700000000000003px;width:18px;height:18px;border-radius:50%;background:#fe5f57;box-shadow:inset 0 0 0 0.6px rgba(0,0,0,0.15)"></div><div style="left:1018px;top:27.700000000000003px;width:18px;height:18px;border-radius:50%;background:#febc2e;box-shadow:inset 0 0 0 0.6px rgba(0,0,0,0.15)"></div><div style="left:1048px;top:27.700000000000003px;width:18px;height:18px;border-radius:50%;background:#28c840;box-shadow:inset 0 0 0 0.6px rgba(0,0,0,0.15)"></div><div class="t" style="left:1274.50px;width:1200px;text-align:center;top:24.53px;font-size:23px;color:#474747;letter-spacing:0.7px">[visual]</div><svg style="left:978px;top:56px" width="1794" height="1518"><rect x="38" y="0" width="314" height="366" fill="#050505"/><rect x="486" y="0" width="314" height="366" fill="#050505"/><rect x="934" y="0" width="314" height="366" fill="#050505"/><rect x="1382" y="0" width="314" height="366" fill="#050505"/><rect x="38" y="370" width="314" height="366" fill="#050505"/><rect x="486" y="370" width="314" height="366" fill="#050505"/><rect x="934" y="370" width="314" height="366" fill="#050505"/><rect x="1382" y="370" width="314" height="366" fill="#050505"/><rect x="38" y="740" width="314" height="366" fill="#050505"/><rect x="486" y="740" width="314" height="366" fill="#050505"/><rect x="934" y="740" width="314" height="366" fill="#050505"/><rect x="1382" y="740" width="314" height="366" fill="#050505"/><rect x="38" y="1110" width="314" height="366" fill="#050505"/><rect x="486" y="1110" width="314" height="366" fill="#050505"/><rect x="934" y="1110" width="314" height="366" fill="#050505"/><rect x="1382" y="1110" width="314" height="366" fill="#050505"/><path d="M89.50 262.10 A149.2 149.2 0 1 1 300.50 262.10 L255.67 217.27 A85.8 85.8 0 1 0 134.33 217.27 Z" fill="#ff00ff"/><circle cx="195" cy="156.6" r="38.5" fill="#000"/><path d="M539.16 49.27 A149.2 149.2 0 0 1 748.30 262.10 L703.47 217.27 A85.8 85.8 0 0 0 583.20 94.88 Z" fill="#3a3d6b"/><path d="M537.30 262.10 A149.2 149.2 0 0 1 539.16 49.27 L583.20 94.88 A85.8 85.8 0 0 0 582.13 217.27 Z" fill="#ff00ff"/><circle cx="642.8" cy="156.6" r="38.5" fill="#000"/><path d="M1040.06 16.22 A149.2 149.2 0 0 1 1196.10 262.10 L1151.27 217.27 A85.8 85.8 0 0 0 1061.54 75.87 Z" fill="#3a3d6b"/><path d="M985.10 262.10 A149.2 149.2 0 0 1 1040.06 16.22 L1061.54 75.87 A85.8 85.8 0 0 0 1029.93 217.27 Z" fill="#ff00ff"/><circle cx="1090.6" cy="156.6" r="38.5" fill="#000"/><path d="M1390.01 142.04 A149.2 149.2 0 1 1 1644.00 262.10 L1599.17 217.27 A85.8 85.8 0 1 0 1453.11 148.23 Z" fill="#3a3d6b"/><path d="M1433.00 262.10 A149.2 149.2 0 0 1 1390.01 142.04 L1453.11 148.23 A85.8 85.8 0 0 0 1477.83 217.27 Z" fill="#ff00ff"/><circle cx="1538.5" cy="156.6" r="38.5" fill="#000"/><path d="M192.92 377.61 A149.2 149.2 0 0 1 300.50 632.30 L255.67 587.47 A85.8 85.8 0 0 0 193.80 441.01 Z" fill="#3a3d6b"/><path d="M89.50 632.30 A149.2 149.2 0 0 1 192.92 377.61 L193.80 441.01 A85.8 85.8 0 0 0 134.33 587.47 Z" fill="#ff0000"/><circle cx="195" cy="526.8" r="38.5" fill="#3a3d6b"/><path d="M522.09 439.10 A149.2 149.2 0 1 1 748.30 632.30 L703.47 587.47 A85.8 85.8 0 1 0 573.39 476.37 Z" fill="#3a3d6b"/><path d="M537.30 632.30 A149.2 149.2 0 0 1 522.09 439.10 L573.39 476.37 A85.8 85.8 0 0 0 582.13 587.47 Z" fill="#ff0000"/><circle cx="642.8" cy="526.8" r="38.5" fill="#3a3d6b"/><path d="M958.86 596.85 A149.2 149.2 0 1 1 1196.10 632.30 L1151.27 587.47 A85.8 85.8 0 1 0 1014.84 567.08 Z" fill="#3a3d6b"/><path d="M985.10 632.30 A149.2 149.2 0 0 1 958.86 596.85 L1014.84 567.08 A85.8 85.8 0 0 0 1029.93 587.47 Z" fill="#ff0000"/><circle cx="1090.6" cy="526.8" r="38.5" fill="#3a3d6b"/><path d="M1433.00 632.30 A149.2 149.2 0 1 1 1644.00 632.30 L1599.17 587.47 A85.8 85.8 0 1 0 1477.83 587.47 Z" fill="#1effff"/><circle cx="1538.5" cy="526.8" r="38.5" fill="#3a3d6b"/><path d="M336.07 945.57 A149.2 149.2 0 0 1 300.50 1002.50 L255.67 957.67 A85.8 85.8 0 0 0 276.13 924.93 Z" fill="#3a3d6b"/><path d="M89.50 1002.50 A149.2 149.2 0 1 1 336.07 945.57 L276.13 924.93 A85.8 85.8 0 1 0 134.33 957.67 Z" fill="#1eff00"/><circle cx="195" cy="897.0" r="38.5" fill="#000"/><path d="M575.53 763.83 A149.2 149.2 0 0 1 748.30 1002.50 L703.47 957.67 A85.8 85.8 0 0 0 604.11 820.42 Z" fill="#3a3d6b"/><path d="M537.30 1002.50 A149.2 149.2 0 0 1 575.53 763.83 L604.11 820.42 A85.8 85.8 0 0 0 582.13 957.67 Z" fill="#1eff00"/><circle cx="642.8" cy="897.0" r="38.5" fill="#000"/><path d="M953.88 956.73 A149.2 149.2 0 1 1 1196.10 1002.50 L1151.27 957.67 A85.8 85.8 0 1 0 1011.98 931.35 Z" fill="#3a3d6b"/><path d="M985.10 1002.50 A149.2 149.2 0 0 1 953.88 956.73 L1011.98 931.35 A85.8 85.8 0 0 0 1029.93 957.67 Z" fill="#1eff00"/><circle cx="1090.6" cy="897.0" r="38.5" fill="#000"/><path d="M1433.00 1002.50 A149.2 149.2 0 1 1 1644.00 1002.50 L1599.17 957.67 A85.8 85.8 0 1 0 1477.83 957.67 Z" fill="#3a3d6b"/><circle cx="1538.5" cy="897.0" r="38.5" fill="#000"/><path d="M89.50 1372.70 A149.2 149.2 0 1 1 300.50 1372.70 L255.67 1327.87 A85.8 85.8 0 1 0 134.33 1327.87 Z" fill="#3a3d6b"/><circle cx="195" cy="1267.2" r="38.5" fill="#000"/><path d="M537.30 1372.70 A149.2 149.2 0 1 1 748.30 1372.70 L703.47 1327.87 A85.8 85.8 0 1 0 582.13 1327.87 Z" fill="#3a3d6b"/><circle cx="642.8" cy="1267.2" r="38.5" fill="#000"/><path d="M985.10 1372.70 A149.2 149.2 0 1 1 1196.10 1372.70 L1151.27 1327.87 A85.8 85.8 0 1 0 1029.93 1327.87 Z" fill="#3a3d6b"/><circle cx="1090.6" cy="1267.2" r="38.5" fill="#000"/><path d="M1433.00 1372.70 A149.2 149.2 0 1 1 1644.00 1372.70 L1599.17 1327.87 A85.8 85.8 0 1 0 1477.83 1327.87 Z" fill="#3a3d6b"/><circle cx="1538.5" cy="1267.2" r="38.5" fill="#000"/></svg><div class="t" style="left:573.00px;width:1200px;text-align:center;top:330.18px;font-size:80px;color:#9ba0cf;transform:scaleX(1.05);-webkit-text-stroke:0.7px #9ba0cf">Filter</div><div class="t" style="left:1020.80px;width:1200px;text-align:center;top:330.18px;font-size:80px;color:#9ba0cf;transform:scaleX(0.99);-webkit-text-stroke:0.7px #9ba0cf">Detune</div><div class="t" style="left:1468.60px;width:1200px;text-align:center;top:330.18px;font-size:80px;color:#9ba0cf;transform:scaleX(0.896);-webkit-text-stroke:0.7px #9ba0cf">LFO</div><div class="t" style="left:1916.50px;width:1200px;text-align:center;top:330.18px;font-size:80px;color:#9ba0cf;transform:scaleX(0.91);-webkit-text-stroke:0.7px #9ba0cf">Env</div><div class="t" style="left:573.00px;width:1200px;text-align:center;top:700.38px;font-size:80px;color:#9ba0cf;transform:scaleX(0.97);-webkit-text-stroke:0.7px #9ba0cf">Freq</div><div class="t" style="left:1020.80px;width:1200px;text-align:center;top:700.38px;font-size:80px;color:#9ba0cf;transform:scaleX(0.89);-webkit-text-stroke:0.7px #9ba0cf">Res</div><div class="t" style="left:1468.60px;width:1200px;text-align:center;top:700.38px;font-size:80px;color:#9ba0cf;transform:scaleX(0.994);-webkit-text-stroke:0.7px #9ba0cf">Detune</div><div class="t" style="left:1916.50px;width:1200px;text-align:center;top:700.38px;font-size:80px;color:#9ba0cf;transform:scaleX(1.1);-webkit-text-stroke:0.7px #9ba0cf">5th</div><div class="t" style="left:573.00px;width:1200px;text-align:center;top:1070.58px;font-size:80px;color:#9ba0cf;transform:scaleX(0.974);-webkit-text-stroke:0.7px #9ba0cf">Tone</div><div class="t" style="left:1020.80px;width:1200px;text-align:center;top:1070.58px;font-size:80px;color:#9ba0cf;transform:scaleX(0.995);-webkit-text-stroke:0.7px #9ba0cf">Drive</div><div class="t" style="left:1468.60px;width:1200px;text-align:center;top:1070.58px;font-size:80px;color:#9ba0cf;transform:scaleX(0.994);-webkit-text-stroke:0.7px #9ba0cf">Detune</div><div style="left:1000px;top:1538px;width:84px;height:26px;border:2px solid #f4f4f4;box-sizing:border-box;background:#121212"></div><div class="t" style="left:442.00px;width:1200px;text-align:center;top:1542.56px;font-size:18px;color:#f4f4f4;font-weight:bold;transform:scaleX(0.93)">COLORS</div><svg style="left:776px;top:116px" width="40" height="40"><g transform="translate(-776,-116)"><path d="M800.5 140.5 L812 152" stroke="#ececec" stroke-width="6" stroke-linecap="square"/><circle cx="794" cy="133.8" r="9.35" stroke="#ececec" stroke-width="7.1" fill="none"/><circle cx="794" cy="133.8" r="9.35" stroke="#000" stroke-width="3.4" fill="none"/><path d="M801.5 141.5 L810.5 150.5" stroke="#000" stroke-width="2.4"/></g></svg>
</body></html>
